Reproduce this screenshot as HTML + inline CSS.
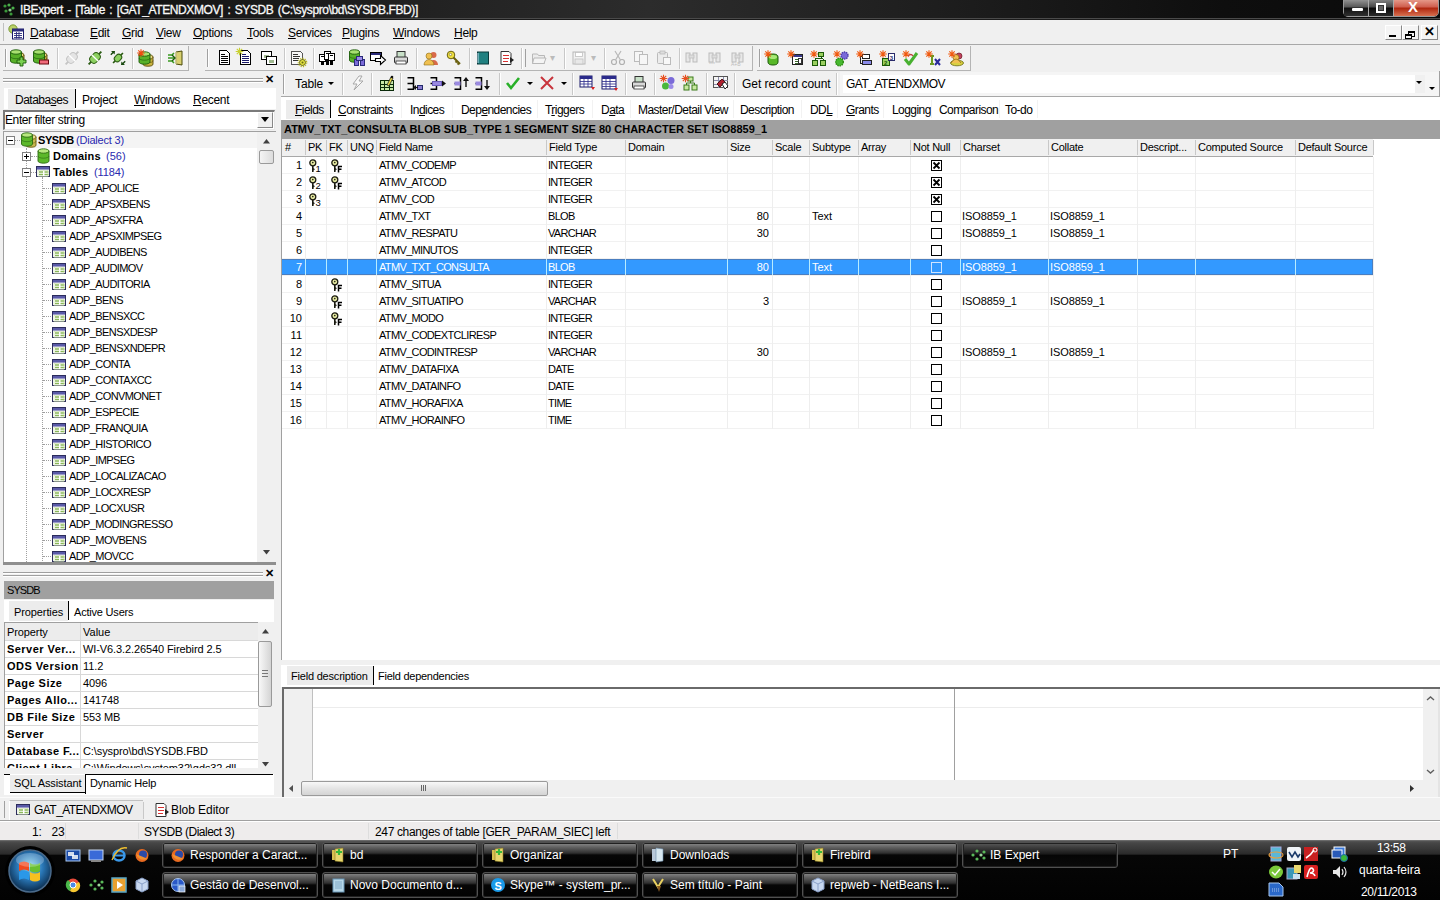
<!DOCTYPE html><html><head><meta charset="utf-8"><title>IBExpert</title><style>
*{margin:0;padding:0;box-sizing:border-box}
html,body{width:1440px;height:900px;overflow:hidden;background:#f0f0f0;font-family:"Liberation Sans",sans-serif;font-size:11px;color:#000}
.r{position:absolute}
.t{position:absolute;white-space:nowrap;line-height:17px;font-size:11px}
.u{letter-spacing:-0.6px}
.b{font-weight:bold}
.s12{font-size:12px}
.ic{position:absolute;overflow:visible}
u{text-decoration:underline;text-underline-offset:1px}
</style></head><body>
<div class="r" style="left:0px;top:0px;width:1440px;height:19px;background:linear-gradient(90deg,#0d0d0d 0%,#1b1b1b 20%,#2c2c2c 45%,#1e1e1e 65%,#0e0e0e 85%,#0a0a0a 100%)"></div>
<div class="r" style="left:0px;top:18px;width:1440px;height:1px;background:#4a4a4a"></div>
<div class="r" style="left:0px;top:19px;width:1440px;height:1px;background:#1a1a1a"></div>
<svg class="ic" style="left:2px;top:2px" width="14" height="14" viewBox="0 0 14 14"><circle cx="3" cy="4" r="1.6" fill="#3a9a3a"/><circle cx="7" cy="3" r="1.6" fill="#4ab04a"/><circle cx="11" cy="6" r="1.6" fill="#4ab04a"/><circle cx="4" cy="9" r="1.6" fill="#3a9a3a"/><circle cx="8" cy="8" r="1.6" fill="#8ad08a"/><circle cx="9" cy="12" r="1.6" fill="#3a9a3a"/></svg>
<span class="t " style="left:20px;top:2px;color:#f8f8f8;font-size:12px;letter-spacing:-0.4px;word-spacing:1.5px;-webkit-text-stroke:0.3px #f8f8f8">IBExpert - [Table : [GAT_ATENDXMOV] : SYSDB (C:\syspro\bd\SYSDB.FBD)]</span>
<div class="r" style="left:1343px;top:-2px;width:96px;height:19px;border:1px solid #9a9a9a;border-radius:0 0 5px 5px;background:#202020"></div>
<div class="r" style="left:1344px;top:-1px;width:25px;height:17px;background:linear-gradient(#9a9a9a,#5a5a5a 45%,#101010 55%,#303030);border-right:1px solid #aaa"></div>
<div class="r" style="left:1369px;top:-1px;width:25px;height:17px;background:linear-gradient(#8a8a8a,#4a4a4a 45%,#0a0a0a 55%,#2a2a2a);border-right:1px solid #aaa"></div>
<div class="r" style="left:1394px;top:-1px;width:44px;height:17px;background:linear-gradient(#e8a090,#d06050 45%,#b02810 55%,#d87050);border-radius:0 0 4px 0"></div>
<div class="r" style="left:1352px;top:8px;width:11px;height:3px;background:#fff;border-radius:1px"></div>
<div class="r" style="left:1376px;top:3px;width:10px;height:10px;border:2px solid #fff;background:#333"></div>
<div class="r" style="left:1379px;top:6px;width:4px;height:4px;background:#666"></div>
<span class="t" style="left:1408px;top:-2px;color:#fff;font-size:15px;font-weight:bold">X</span>
<div class="r" style="left:0px;top:20px;width:1440px;height:25px;background:#f0f0f0"></div>
<div class="r" style="left:0px;top:44px;width:1440px;height:1px;background:#a8a8a8"></div>
<div class="r" style="left:3px;top:23px;width:1px;height:18px;background:#c0c0c0"></div>
<svg class="ic" style="left:8px;top:24px" width="17" height="17" viewBox="0 0 17 17"><circle cx="5" cy="5" r="4.2" fill="#b8d068" stroke="#6a8a20" stroke-width="0.8"/><rect x="4.5" y="5" width="11" height="10" fill="#fff" stroke="#1a1a6a"/><rect x="4.5" y="5" width="11" height="2.5" fill="#2a2a7a"/><path d="M6,9.5h8M6,11.5h8M6,13.5h8M8.5,8v6.5M11,8v6.5" stroke="#2a2a7a" stroke-width="0.9"/></svg>
<span class="t " style="left:30px;top:25px;font-size:12px;line-height:17px;letter-spacing:-0.3px"><u>D</u>atabase</span>
<span class="t " style="left:90px;top:25px;font-size:12px;line-height:17px;letter-spacing:-0.3px"><u>E</u>dit</span>
<span class="t " style="left:122px;top:25px;font-size:12px;line-height:17px;letter-spacing:-0.3px"><u>G</u>rid</span>
<span class="t " style="left:156px;top:25px;font-size:12px;line-height:17px;letter-spacing:-0.3px"><u>V</u>iew</span>
<span class="t " style="left:193px;top:25px;font-size:12px;line-height:17px;letter-spacing:-0.3px"><u>O</u>ptions</span>
<span class="t " style="left:247px;top:25px;font-size:12px;line-height:17px;letter-spacing:-0.3px"><u>T</u>ools</span>
<span class="t " style="left:288px;top:25px;font-size:12px;line-height:17px;letter-spacing:-0.3px"><u>S</u>ervices</span>
<span class="t " style="left:342px;top:25px;font-size:12px;line-height:17px;letter-spacing:-0.3px"><u>P</u>lugins</span>
<span class="t " style="left:393px;top:25px;font-size:12px;line-height:17px;letter-spacing:-0.3px"><u>W</u>indows</span>
<span class="t " style="left:454px;top:25px;font-size:12px;line-height:17px;letter-spacing:-0.3px"><u>H</u>elp</span>
<div class="r" style="left:1385px;top:25px;width:17px;height:15px;background:#f4f4f4;border-right:1px solid #888;border-bottom:1px solid #888;border-top:1px solid #fff;border-left:1px solid #fff"></div>
<div class="r" style="left:1402px;top:25px;width:17px;height:15px;background:#f4f4f4;border-right:1px solid #888;border-bottom:1px solid #888;border-top:1px solid #fff;border-left:1px solid #fff"></div>
<div class="r" style="left:1421px;top:25px;width:17px;height:15px;background:#f4f4f4;border-right:1px solid #888;border-bottom:1px solid #888;border-top:1px solid #fff;border-left:1px solid #fff"></div>
<div class="r" style="left:1389px;top:35px;width:7px;height:2px;background:#000"></div>
<div class="r" style="left:1408px;top:31px;width:7px;height:6px;border:1.5px solid #000;border-top-width:2px;background:#f4f4f4"></div>
<div class="r" style="left:1405px;top:34px;width:7px;height:5px;border:1.5px solid #000;border-top-width:2px;background:#f4f4f4"></div>
<span class="t" style="left:1424px;top:23px;font-size:13px;font-weight:bold;line-height:17px">&#x2715;</span>
<div class="r" style="left:0px;top:45px;width:1440px;height:26px;background:#f0f0f0"></div>
<div class="r" style="left:3px;top:46px;width:186px;height:25px;border-right:1px solid #b4b4b4;border-bottom:1px solid #b4b4b4;background:#f2f2f2"></div>
<div class="r" style="left:5px;top:49px;width:1px;height:18px;background:#a0a0a0"></div>
<div class="r" style="left:6px;top:49px;width:1px;height:18px;background:#fff"></div>
<svg class="ic" style="left:9px;top:49px" width="18" height="18" viewBox="0 0 18 18"><path d="M7,6 L7,12 A4,2.2 0 0 0 15,12 L15,6 Z" fill="#c8b440" stroke="#5a4a08" stroke-width="0.9"/><path d="M7,9.0 A4,2.2 0 0 0 15,9.0" fill="none" stroke="#5a4a08" stroke-width="0.6"/><ellipse cx="11" cy="6" rx="4" ry="2.2" fill="#e8d880" stroke="#5a4a08" stroke-width="0.9"/><path d="M1.5,3 L1.5,12 A5.5,2.2 0 0 0 12.5,12 L12.5,3 Z" fill="#58b028" stroke="#1a5a08" stroke-width="0.9"/><path d="M1.5,7.5 A5.5,2.2 0 0 0 12.5,7.5" fill="none" stroke="#1a5a08" stroke-width="0.6"/><ellipse cx="7" cy="3" rx="5.5" ry="2.2" fill="#a8e070" stroke="#1a5a08" stroke-width="0.9"/><path d="M11,8h3v3h3v3h-3v3h-3v-3h-3v-3h3z" fill="#7ad050" stroke="#1a5a08" stroke-width="0.9"/></svg>
<svg class="ic" style="left:32px;top:49px" width="18" height="18" viewBox="0 0 18 18"><path d="M7,6 L7,12 A4,2.2 0 0 0 15,12 L15,6 Z" fill="#c8b440" stroke="#5a4a08" stroke-width="0.9"/><path d="M7,9.0 A4,2.2 0 0 0 15,9.0" fill="none" stroke="#5a4a08" stroke-width="0.6"/><ellipse cx="11" cy="6" rx="4" ry="2.2" fill="#e8d880" stroke="#5a4a08" stroke-width="0.9"/><path d="M1.5,3 L1.5,12 A5.5,2.2 0 0 0 12.5,12 L12.5,3 Z" fill="#58b028" stroke="#1a5a08" stroke-width="0.9"/><path d="M1.5,7.5 A5.5,2.2 0 0 0 12.5,7.5" fill="none" stroke="#1a5a08" stroke-width="0.6"/><ellipse cx="7" cy="3" rx="5.5" ry="2.2" fill="#a8e070" stroke="#1a5a08" stroke-width="0.9"/><rect x="7.5" y="11" width="9" height="4" fill="#f06a7a" stroke="#6a0a10" stroke-width="1"/></svg>
<div class="r" style="left:57px;top:48px;width:1px;height:21px;background:#c8c8c8"></div>
<div class="r" style="left:58px;top:48px;width:1px;height:21px;background:#fff"></div>
<svg class="ic" style="left:64px;top:50px" width="16" height="16" viewBox="0 0 16 16"><g transform="rotate(-45 8 8)"><rect x="2.5" y="4" width="11" height="8" rx="3.5" fill="#e4e4e4" stroke="#c4c4c4" stroke-width="1"/><path d="M8,3 v10" stroke="#fff" stroke-width="1.3"/><path d="M-1,8 h3.5 M13.5,8 h3.5" stroke="#c4c4c4" stroke-width="1.8"/></g></svg>
<svg class="ic" style="left:87px;top:50px" width="16" height="16" viewBox="0 0 16 16"><g transform="rotate(-45 8 8)"><rect x="2.5" y="4" width="11" height="8" rx="3.5" fill="#8cd060" stroke="#2a5a12" stroke-width="1"/><path d="M8,3 v10" stroke="#fff" stroke-width="1.3"/><path d="M-1,8 h3.5 M13.5,8 h3.5" stroke="#2a5a12" stroke-width="1.8"/></g></svg>
<svg class="ic" style="left:110px;top:50px" width="16" height="16" viewBox="0 0 16 16"><g transform="rotate(-45 8 8)"><rect x="4" y="5" width="8" height="6" rx="3" fill="#8cd060" stroke="#2a5a12" stroke-width="1"/><path d="M1,8 h3 M12,8 h3" stroke="#2a5a12" stroke-width="1.6"/></g><path d="M1,1 v4 l1.3,-1.3 l2,2 l1,-1 l-2,-2 l1.3,-1.3z" fill="#1a4a10" transform="rotate(90 3 3)"/><path d="M15,15 v-4 l-1.3,1.3 l-2,-2 l-1,1 l2,2 l-1.3,1.3z" fill="#1a4a10" transform="rotate(90 13 13)"/></svg>
<div class="r" style="left:132px;top:48px;width:1px;height:21px;background:#c8c8c8"></div>
<div class="r" style="left:133px;top:48px;width:1px;height:21px;background:#fff"></div>
<svg class="ic" style="left:137px;top:49px" width="18" height="18" viewBox="0 0 18 18"><path d="M6,8 L6,15 A5,2.2 0 0 0 16,15 L16,8 Z" fill="#c8b440" stroke="#5a4a08" stroke-width="0.9"/><path d="M6,11.5 A5,2.2 0 0 0 16,11.5" fill="none" stroke="#5a4a08" stroke-width="0.6"/><ellipse cx="11" cy="8" rx="5" ry="2.2" fill="#e8d880" stroke="#5a4a08" stroke-width="0.9"/><path d="M2.0,5 L2.0,13 A5.5,2.2 0 0 0 13.0,13 L13.0,5 Z" fill="#58b028" stroke="#1a5a08" stroke-width="0.9"/><path d="M2.0,9.0 A5.5,2.2 0 0 0 13.0,9.0" fill="none" stroke="#1a5a08" stroke-width="0.6"/><ellipse cx="7.5" cy="5" rx="5.5" ry="2.2" fill="#a8e070" stroke="#1a5a08" stroke-width="0.9"/><g stroke="#f04a10" stroke-width="1.1"><path d="M0.20000000000000018,4 h7.6 M4,0.20000000000000018 v7.6 M1.2999999999999998,1.2999999999999998 l5.4,5.4 M6.7,1.2999999999999998 l-5.4,5.4"/></g></svg>
<div class="r" style="left:160px;top:48px;width:1px;height:21px;background:#c8c8c8"></div>
<div class="r" style="left:161px;top:48px;width:1px;height:21px;background:#fff"></div>
<svg class="ic" style="left:167px;top:50px" width="16" height="16" viewBox="0 0 16 16"><path d="M9,2 L15,1 L15,15 L9,14 Z" fill="#d8d070" stroke="#4a4a08" stroke-width="1"/><path d="M9,2 v12" stroke="#f8f0b0" stroke-width="1"/><path d="M1,5 h4 l2,-2 M1,8 h6 M1,11 h4 l2,2" stroke="#3a9a20" stroke-width="1.6" fill="none"/><path d="M5,5 l3,3 l-3,3" stroke="#1a5a08" stroke-width="1.4" fill="none"/></svg>
<div class="r" style="left:205px;top:46px;width:548px;height:25px;border-right:1px solid #b4b4b4;border-bottom:1px solid #b4b4b4;background:#f2f2f2"></div>
<div class="r" style="left:207px;top:49px;width:1px;height:18px;background:#a0a0a0"></div>
<div class="r" style="left:208px;top:49px;width:1px;height:18px;background:#fff"></div>
<svg class="ic" style="left:217px;top:49px" width="18" height="18" viewBox="0 0 18 18"><g shape-rendering="crispEdges"><path d="M2.5,1.5 h7 l3,3 v11 h-10z" fill="#fff" stroke="#000" stroke-width="1"/><path d="M4,5.5h4M4,7.5h7M4,9.5h7M4,11.5h7M4,13.5h7" stroke="#000" stroke-width="1"/></g></svg>
<svg class="ic" style="left:236px;top:48px" width="18" height="18" viewBox="0 0 18 18"><g transform="translate(2,1)"><g shape-rendering="crispEdges"><path d="M2.5,1.5 h7 l3,3 v11 h-10z" fill="#fff" stroke="#000" stroke-width="1"/><path d="M4,5.5h4M4,7.5h7M4,9.5h7M4,11.5h7M4,13.5h7" stroke="#1a1a6a" stroke-width="1"/></g></g><g stroke="#c8d030" stroke-width="1.1"><path d="M-0.2999999999999998,3.5 h7.6 M3.5,-0.2999999999999998 v7.6 M0.7999999999999998,0.7999999999999998 l5.4,5.4 M6.2,0.7999999999999998 l-5.4,5.4"/></g></svg>
<svg class="ic" style="left:261px;top:50px" width="17" height="17" viewBox="0 0 17 17"><g shape-rendering="crispEdges"><rect x="0.5" y="1.5" width="10" height="8" fill="#fff" stroke="#000" stroke-width="1.6"/><rect x="2.5" y="4.5" width="5" height="3" fill="#a0b890"/><rect x="5.5" y="6.5" width="10" height="8" fill="#fff" stroke="#000" stroke-width="1.6"/><rect x="7.5" y="9.5" width="5" height="3" fill="#a0b890"/></g></svg>
<div class="r" style="left:284px;top:48px;width:1px;height:21px;background:#c8c8c8"></div>
<div class="r" style="left:285px;top:48px;width:1px;height:21px;background:#fff"></div>
<svg class="ic" style="left:290px;top:50px" width="17" height="17" viewBox="0 0 17 17"><g shape-rendering="crispEdges"><path d="M1.5,1.5 h9 l2,2 v11 h-11z" fill="#f8f8f8" stroke="#555"/><path d="M3,4.5h5M3,6.5h7M3,8.5h6M3,10.5h5" stroke="#333"/></g><circle cx="12.5" cy="12.5" r="3" fill="#e0e040" stroke="#6a6a10" stroke-width="1"/><circle cx="12.5" cy="12.5" r="4.2" fill="none" stroke="#b8b820" stroke-width="1.2" stroke-dasharray="1.2 1.2"/><circle cx="12.5" cy="12.5" r="1" fill="#6a6a10"/></svg>
<div class="r" style="left:313px;top:48px;width:1px;height:21px;background:#c8c8c8"></div>
<div class="r" style="left:314px;top:48px;width:1px;height:21px;background:#fff"></div>
<svg class="ic" style="left:319px;top:50px" width="17" height="17" viewBox="0 0 17 17"><g shape-rendering="crispEdges"><rect x="0.5" y="4.5" width="6" height="7" fill="#fff" stroke="#000"/><rect x="5.5" y="1.5" width="6" height="8" fill="#fff" stroke="#000"/><rect x="9.5" y="3.5" width="6" height="7" fill="#fff" stroke="#000"/><path d="M2,6.5h3M7,3.5h3M11,5.5h3" stroke="#000"/><rect x="2" y="11" width="3" height="4" fill="#000"/><rect x="7" y="9" width="3" height="6" fill="#000"/><rect x="11" y="10" width="3" height="5" fill="#000"/></g></svg>
<div class="r" style="left:342px;top:48px;width:1px;height:21px;background:#c8c8c8"></div>
<div class="r" style="left:343px;top:48px;width:1px;height:21px;background:#fff"></div>
<svg class="ic" style="left:348px;top:49px" width="17" height="17" viewBox="0 0 17 17"><path d="M1.5,3 L1.5,11 A5,2.2 0 0 0 11.5,11 L11.5,3 Z" fill="#58b028" stroke="#1a5a08" stroke-width="0.9"/><path d="M1.5,7.0 A5,2.2 0 0 0 11.5,7.0" fill="none" stroke="#1a5a08" stroke-width="0.6"/><ellipse cx="6.5" cy="3" rx="5" ry="2.2" fill="#a8e070" stroke="#1a5a08" stroke-width="0.9"/><g shape-rendering="crispEdges"><rect x="6" y="10" width="4" height="6" fill="#7a6ad8" stroke="#2a2a7a"/><rect x="12" y="10" width="4" height="6" fill="#7a6ad8" stroke="#2a2a7a"/><rect x="8" y="7" width="6" height="4" fill="#9a8ae8" stroke="#2a2a7a"/></g></svg>
<svg class="ic" style="left:370px;top:50px" width="17" height="17" viewBox="0 0 17 17"><g shape-rendering="crispEdges"><rect x="0.5" y="2.5" width="11" height="8" fill="#fff" stroke="#000" stroke-width="1.2"/><rect x="1" y="3" width="10" height="2" fill="#2a2a7a"/></g><path d="M5.5,8.5h5v-3l5,4.5l-5,4.5v-3h-5z" fill="#fff" stroke="#000" stroke-width="1.1"/></svg>
<svg class="ic" style="left:393px;top:50px" width="16" height="16" viewBox="0 0 16 16"><rect x="4" y="1.5" width="8" height="6" fill="#c8e0c8" stroke="#333"/><rect x="1.5" y="7" width="13" height="6" rx="1" fill="#d8d8d8" stroke="#333"/><rect x="3" y="11" width="10" height="3" fill="#fff" stroke="#333" stroke-width="0.8"/></svg>
<div class="r" style="left:416px;top:48px;width:1px;height:21px;background:#c8c8c8"></div>
<div class="r" style="left:417px;top:48px;width:1px;height:21px;background:#fff"></div>
<svg class="ic" style="left:423px;top:50px" width="16" height="16" viewBox="0 0 16 16"><circle cx="10.5" cy="5" r="3" fill="#d86a4a"/><path d="M6,15 a4.5,5 0 0 1 9,0z" fill="#d86a4a"/><circle cx="6" cy="6" r="3" fill="#f0c050" stroke="#8a6a10" stroke-width="0.6"/><path d="M1,15 a5,5.5 0 0 1 10,0z" fill="#f0c050" stroke="#8a6a10" stroke-width="0.6"/></svg>
<svg class="ic" style="left:446px;top:50px" width="16" height="16" viewBox="0 0 16 16"><circle cx="5" cy="5" r="3.8" fill="#f0e040" stroke="#6a6010" stroke-width="1"/><circle cx="4.5" cy="4.5" r="1.2" fill="#fff" stroke="#6a6010" stroke-width="0.6"/><path d="M7.5,7.5 L14,14 M11,11l-1.5,1.5 M13,13l-1.5,1.5" stroke="#6a6010" stroke-width="2"/></svg>
<div class="r" style="left:469px;top:48px;width:1px;height:21px;background:#c8c8c8"></div>
<div class="r" style="left:470px;top:48px;width:1px;height:21px;background:#fff"></div>
<svg class="ic" style="left:475px;top:50px" width="16" height="16" viewBox="0 0 16 16"><rect x="2.5" y="2" width="11" height="12" fill="#208080" stroke="#0a3a3a"/><path d="M3,3v10" stroke="#bde" stroke-width="1"/></svg>
<svg class="ic" style="left:499px;top:50px" width="16" height="16" viewBox="0 0 16 16"><path d="M2,1.5h8l2,2v11h-10z" fill="#fff" stroke="#333"/><path d="M4,5.5h6M4,8.5h6M4,11.5h5" stroke="#d83030" stroke-width="1.2"/><path d="M11,7 l4,3 l-4,3z" fill="#222"/></svg>
<div class="r" style="left:521px;top:48px;width:1px;height:21px;background:#c8c8c8"></div>
<div class="r" style="left:522px;top:48px;width:1px;height:21px;background:#fff"></div>
<div class="r" style="left:525px;top:49px;width:1px;height:18px;background:#a0a0a0"></div>
<svg class="ic" style="left:531px;top:50px" width="16" height="16" viewBox="0 0 16 16"><path d="M1.5,4h5l1,1.5h6v8h-12z" fill="#ececec" stroke="#b8b8b8"/><path d="M3,8h12l-2,5.5h-11.5z" fill="#f4f4f4" stroke="#b8b8b8"/></svg>
<span class="t " style="left:550px;top:49px;color:#bbb;font-size:10px">&#9662;</span>
<div class="r" style="left:564px;top:48px;width:1px;height:21px;background:#c8c8c8"></div>
<div class="r" style="left:565px;top:48px;width:1px;height:21px;background:#fff"></div>
<svg class="ic" style="left:571px;top:50px" width="16" height="16" viewBox="0 0 16 16"><rect x="2" y="2" width="12" height="12" fill="#f2f2f2" stroke="#b8b8b8"/><rect x="4.5" y="2.5" width="7" height="4" fill="#fff" stroke="#c0c0c0" stroke-width="0.8"/><rect x="4" y="9" width="8" height="5" fill="#e8e8e8" stroke="#c0c0c0" stroke-width="0.8"/></svg>
<span class="t " style="left:591px;top:49px;color:#bbb;font-size:10px">&#9662;</span>
<div class="r" style="left:604px;top:48px;width:1px;height:21px;background:#c8c8c8"></div>
<div class="r" style="left:605px;top:48px;width:1px;height:21px;background:#fff"></div>
<svg class="ic" style="left:610px;top:50px" width="16" height="16" viewBox="0 0 16 16"><circle cx="4" cy="12" r="2.5" fill="none" stroke="#b0b0b0" stroke-width="1.2"/><circle cx="12" cy="12" r="2.5" fill="none" stroke="#b0b0b0" stroke-width="1.2"/><path d="M5.5,10 L11,1 M10.5,10 L5,1" stroke="#b8b8b8" stroke-width="1.2"/></svg>
<svg class="ic" style="left:633px;top:50px" width="16" height="16" viewBox="0 0 16 16"><rect x="1.5" y="1.5" width="8" height="10" fill="#f6f6f6" stroke="#bbb"/><rect x="6.5" y="4.5" width="8" height="10" fill="#f6f6f6" stroke="#bbb"/></svg>
<svg class="ic" style="left:656px;top:50px" width="16" height="16" viewBox="0 0 16 16"><rect x="1.5" y="2.5" width="10" height="11" rx="1" fill="#ececec" stroke="#bbb"/><rect x="4" y="1" width="5" height="3" fill="#ddd" stroke="#bbb" stroke-width="0.8"/><rect x="7.5" y="7.5" width="7" height="7" fill="#f8f8f8" stroke="#bbb"/></svg>
<div class="r" style="left:679px;top:48px;width:1px;height:21px;background:#c8c8c8"></div>
<div class="r" style="left:680px;top:48px;width:1px;height:21px;background:#fff"></div>
<svg class="ic" style="left:684px;top:50px" width="16" height="16" viewBox="0 0 16 16"><rect x="2" y="3" width="4" height="9" fill="#e8e8e8" stroke="#bbb"/><rect x="9" y="3" width="4" height="9" fill="#e8e8e8" stroke="#bbb"/><rect x="5" y="5" width="5" height="3" fill="#ddd" stroke="#bbb" stroke-width="0.7"/></svg>
<svg class="ic" style="left:707px;top:50px" width="16" height="16" viewBox="0 0 16 16"><rect x="2" y="3" width="4" height="9" fill="#e8e8e8" stroke="#bbb"/><rect x="9" y="3" width="4" height="9" fill="#e8e8e8" stroke="#bbb"/><rect x="5" y="5" width="5" height="3" fill="#ddd" stroke="#bbb" stroke-width="0.7"/><text x="2" y="16" font-size="5" fill="#bbb">***</text></svg>
<svg class="ic" style="left:730px;top:50px" width="16" height="16" viewBox="0 0 16 16"><rect x="2" y="3" width="4" height="9" fill="#e8e8e8" stroke="#bbb"/><rect x="9" y="3" width="4" height="9" fill="#e8e8e8" stroke="#bbb"/><rect x="5" y="5" width="5" height="3" fill="#ddd" stroke="#bbb" stroke-width="0.7"/><text x="1" y="16" font-size="5" fill="#bbb">A+B</text></svg>
<div class="r" style="left:757px;top:46px;width:214px;height:25px;border-right:1px solid #b4b4b4;border-bottom:1px solid #b4b4b4;background:#f2f2f2"></div>
<div class="r" style="left:759px;top:49px;width:1px;height:18px;background:#a0a0a0"></div>
<div class="r" style="left:760px;top:49px;width:1px;height:18px;background:#fff"></div>
<svg class="ic" style="left:764px;top:50px" width="17" height="17" viewBox="0 0 17 17"><path d="M4,7 q0,-3 5,-3 q5,0 5,3 v5 q0,3 -5,3 q-5,0 -5,-3z" fill="#58b828" stroke="#1a5a08" stroke-width="1"/><ellipse cx="9" cy="7" rx="4" ry="2" fill="#a8e878"/><g stroke="#f05a10" stroke-width="1.1"><path d="M0.20000000000000018,4 h7.6 M4,0.20000000000000018 v7.6 M1.2999999999999998,1.2999999999999998 l5.4,5.4 M6.7,1.2999999999999998 l-5.4,5.4"/></g></svg>
<svg class="ic" style="left:787px;top:50px" width="17" height="17" viewBox="0 0 17 17"><g shape-rendering="crispEdges"><rect x="5.5" y="4.5" width="10" height="10" fill="#fff" stroke="#222"/><rect x="6" y="5" width="9" height="2" fill="#3a3a8a"/><path d="M8,9.5h3M8,11.5h3M8,13.5h3" stroke="#3a6a2a"/><rect x="11.5" y="8.5" width="3" height="5" fill="#fff" stroke="#333"/></g><g stroke="#f05a10" stroke-width="1.1"><path d="M0.20000000000000018,4 h7.6 M4,0.20000000000000018 v7.6 M1.2999999999999998,1.2999999999999998 l5.4,5.4 M6.7,1.2999999999999998 l-5.4,5.4"/></g></svg>
<svg class="ic" style="left:810px;top:50px" width="17" height="17" viewBox="0 0 17 17"><g shape-rendering="crispEdges"><rect x="8.5" y="2.5" width="5" height="4" fill="#9ad060" stroke="#1a5a08"/><rect x="2.5" y="10.5" width="5" height="5" fill="#9ad060" stroke="#1a5a08"/><rect x="10.5" y="10.5" width="5" height="5" fill="#9ad060" stroke="#1a5a08"/><path d="M11,6.5v2M5,8.5h8M5,8.5v2M13,8.5v2" stroke="#1a5a08"/></g><g stroke="#f05a10" stroke-width="1.1"><path d="M0.20000000000000018,4 h7.6 M4,0.20000000000000018 v7.6 M1.2999999999999998,1.2999999999999998 l5.4,5.4 M6.7,1.2999999999999998 l-5.4,5.4"/></g></svg>
<svg class="ic" style="left:833px;top:50px" width="17" height="17" viewBox="0 0 17 17"><circle cx="11.5" cy="5.5" r="3.5" fill="#7a6ad8" stroke="#4a3aa8" stroke-width="1.4" stroke-dasharray="1.4 0.8"/><circle cx="6.5" cy="12" r="3.8" fill="#48b830" stroke="#2a8a10" stroke-width="1.4" stroke-dasharray="1.4 0.8"/><g stroke="#f05a10" stroke-width="1.1"><path d="M0.20000000000000018,4 h7.6 M4,0.20000000000000018 v7.6 M1.2999999999999998,1.2999999999999998 l5.4,5.4 M6.7,1.2999999999999998 l-5.4,5.4"/></g></svg>
<svg class="ic" style="left:856px;top:50px" width="17" height="17" viewBox="0 0 17 17"><g shape-rendering="crispEdges"><rect x="6.5" y="4.5" width="7" height="4" fill="#fff" stroke="#222"/><rect x="6.5" y="10.5" width="9" height="4" fill="#8a8ae8" stroke="#222"/><path d="M4.5,6v7h2M4.5,6h2" stroke="#222" fill="none"/></g><g stroke="#f05a10" stroke-width="1.1"><path d="M0.20000000000000018,4 h7.6 M4,0.20000000000000018 v7.6 M1.2999999999999998,1.2999999999999998 l5.4,5.4 M6.7,1.2999999999999998 l-5.4,5.4"/></g></svg>
<svg class="ic" style="left:879px;top:50px" width="17" height="17" viewBox="0 0 17 17"><g shape-rendering="crispEdges"><rect x="3.5" y="8.5" width="7" height="7" fill="#9ad060" stroke="#1a5a08"/><rect x="9.5" y="3.5" width="6" height="7" fill="#fff" stroke="#2a2a6a"/></g><text x="10.8" y="9.5" font-size="6" font-weight="bold" fill="#2a2a6a" font-family="Liberation Sans">3</text><text x="5" y="14.5" font-size="6" font-weight="bold" fill="#1a5a08" font-family="Liberation Sans">2</text><g stroke="#f05a10" stroke-width="1.1"><path d="M0.20000000000000018,4 h7.6 M4,0.20000000000000018 v7.6 M1.2999999999999998,1.2999999999999998 l5.4,5.4 M6.7,1.2999999999999998 l-5.4,5.4"/></g></svg>
<svg class="ic" style="left:902px;top:50px" width="17" height="17" viewBox="0 0 17 17"><path d="M3,9 l4,5 l8,-11" stroke="#48b030" stroke-width="3" fill="none" stroke-linejoin="round"/><path d="M6,6 q3,-3 5,0" stroke="#c04040" stroke-width="1.3" fill="none"/><g stroke="#f05a10" stroke-width="1.1"><path d="M0.20000000000000018,4 h7.6 M4,0.20000000000000018 v7.6 M1.2999999999999998,1.2999999999999998 l5.4,5.4 M6.7,1.2999999999999998 l-5.4,5.4"/></g></svg>
<svg class="ic" style="left:925px;top:50px" width="17" height="17" viewBox="0 0 17 17"><path d="M5,6h4M7,6v8M5,14h4" stroke="#6a9a20" stroke-width="2" fill="none"/><path d="M10,9 l5,6 M15,9 l-5,6" stroke="#2a2a9a" stroke-width="2"/><g stroke="#f05a10" stroke-width="1.1"><path d="M0.20000000000000018,4 h7.6 M4,0.20000000000000018 v7.6 M1.2999999999999998,1.2999999999999998 l5.4,5.4 M6.7,1.2999999999999998 l-5.4,5.4"/></g></svg>
<svg class="ic" style="left:948px;top:50px" width="17" height="17" viewBox="0 0 17 17"><ellipse cx="9" cy="13" rx="6.5" ry="2.8" fill="#d8d040" stroke="#6a6a10" stroke-width="0.8"/><circle cx="11" cy="6" r="3" fill="#c04060" stroke="#6a1a20" stroke-width="0.7"/><circle cx="8" cy="7.5" r="3" fill="#f0c050" stroke="#8a6010" stroke-width="0.7"/><path d="M3,13 q5,-8 10,0" fill="#f0c050" stroke="#8a6010" stroke-width="0.7"/><g stroke="#f05a10" stroke-width="1.1"><path d="M0.20000000000000018,4 h7.6 M4,0.20000000000000018 v7.6 M1.2999999999999998,1.2999999999999998 l5.4,5.4 M6.7,1.2999999999999998 l-5.4,5.4"/></g></svg>
<div class="r" style="left:0px;top:71px;width:278px;height:730px;background:#f0f0f0"></div>
<div class="r" style="left:3px;top:78px;width:260px;height:1px;background:#a0a0a0"></div>
<div class="r" style="left:3px;top:79px;width:260px;height:1px;background:#fff"></div>
<div class="r" style="left:3px;top:81px;width:260px;height:1px;background:#a0a0a0"></div>
<div class="r" style="left:3px;top:82px;width:260px;height:1px;background:#fff"></div>
<span class="t" style="left:265px;top:71px;font-size:11px;font-weight:bold">&#x2715;</span>
<div class="r" style="left:4px;top:88px;width:272px;height:21px;background:#fff"></div>
<div class="r" style="left:8px;top:89px;width:67px;height:20px;background:#ececec"></div>
<div class="r" style="left:75px;top:89px;width:1px;height:19px;background:#000"></div>
<span class="t " style="left:15px;top:92px;font-size:12px;letter-spacing:-0.5px">Databa<u>s</u>es</span>
<span class="t " style="left:82px;top:92px;font-size:12px;letter-spacing:-0.3px">Pro<u>j</u>ect</span>
<span class="t " style="left:134px;top:92px;font-size:12px;letter-spacing:-0.4px"><u>W</u>indows</span>
<span class="t " style="left:193px;top:92px;font-size:12px;letter-spacing:-0.3px"><u>R</u>ecent</span>
<div class="r" style="left:3px;top:110px;width:272px;height:20px;background:#fff;border-top:2px solid #7a7a7a;border-left:2px solid #7a7a7a;border-bottom:1px solid #e8e8e8;border-right:1px solid #e8e8e8"></div>
<div class="r" style="left:257px;top:112px;width:16px;height:16px;background:#f0f0f0;border:1px solid #fff;border-right-color:#888;border-bottom-color:#888"></div>
<svg class="ic" style="left:261px;top:117px" width="8" height="5" viewBox="0 0 8 5"><path d="M0,0h8l-4,5z" fill="#000"/></svg>
<span class="t " style="left:5px;top:112px;font-size:12px;letter-spacing:-0.4px">Enter filter string</span>
<div class="r" style="left:3px;top:131px;width:273px;height:434px;background:#fff;border-top:1px solid #a0a0a0;border-left:1px solid #a0a0a0;border-bottom:3px solid #8f8f8f"></div>
<div class="r" style="left:4px;top:132px;width:253px;height:16px;background:#f4f4f4"></div>
<div class="r" style="left:257px;top:132px;width:19px;height:430px;background:#f0f0f0"></div>
<svg class="ic" style="left:263px;top:139px" width="7" height="5" viewBox="0 0 7 5"><path d="M0,4.5 L3.5,0 L7,4.5z" fill="#404040"/></svg>
<svg class="ic" style="left:263px;top:550px" width="7" height="5" viewBox="0 0 7 5"><path d="M0,0 L3.5,4.5 L7,0z" fill="#404040"/></svg>
<div class="r" style="left:259px;top:150px;width:15px;height:14px;background:linear-gradient(90deg,#f4f4f4,#dcdcdc);border:1px solid #9a9a9a;border-radius:2px"></div>
<div class="r" style="left:26px;top:148px;width:1px;height:416px;border-left:1px dotted #a0a0a0"></div>
<div class="r" style="left:42px;top:177px;width:1px;height:388px;border-left:1px dotted #a0a0a0"></div>
<div class="r" style="left:6px;top:136px;width:9px;height:9px;background:#fff;border:1px solid #808080"></div>
<div class="r" style="left:8px;top:140px;width:5px;height:1px;background:#000"></div>
<div class="r" style="left:22px;top:152px;width:9px;height:9px;background:#fff;border:1px solid #808080"></div>
<div class="r" style="left:24px;top:156px;width:5px;height:1px;background:#000"></div>
<div class="r" style="left:26px;top:154px;width:1px;height:5px;background:#000"></div>
<div class="r" style="left:22px;top:168px;width:9px;height:9px;background:#fff;border:1px solid #808080"></div>
<div class="r" style="left:24px;top:172px;width:5px;height:1px;background:#000"></div>
<div class="r" style="left:15px;top:140px;width:5px;height:1px;border-top:1px dotted #a0a0a0"></div>
<div class="r" style="left:31px;top:156px;width:6px;height:1px;border-top:1px dotted #a0a0a0"></div>
<div class="r" style="left:31px;top:172px;width:5px;height:1px;border-top:1px dotted #a0a0a0"></div>
<svg class="ic" style="left:20px;top:131px" width="17" height="17" viewBox="0 0 17 17"><path d="M6,6 L6,14 A5,2.2 0 0 0 16,14 L16,6 Z" fill="#c8b850" stroke="#6a5a10" stroke-width="0.9"/><path d="M6,10.0 A5,2.2 0 0 0 16,10.0" fill="none" stroke="#6a5a10" stroke-width="0.6"/><ellipse cx="11" cy="6" rx="5" ry="2.2" fill="#e8dc90" stroke="#6a5a10" stroke-width="0.9"/><path d="M1.5,4 L1.5,13 A5.5,2.2 0 0 0 12.5,13 L12.5,4 Z" fill="#5cb82a" stroke="#2a6a10" stroke-width="0.9"/><path d="M1.5,8.5 A5.5,2.2 0 0 0 12.5,8.5" fill="none" stroke="#2a6a10" stroke-width="0.6"/><ellipse cx="7" cy="4" rx="5.5" ry="2.2" fill="#b8e880" stroke="#2a6a10" stroke-width="0.9"/></svg>
<svg class="ic" style="left:37px;top:148px" width="14" height="16" viewBox="0 0 14 16"><path d="M1.0,3 L1.0,13 A5.5,2.2 0 0 0 12.0,13 L12.0,3 Z" fill="#5cb82a" stroke="#2a6a10" stroke-width="0.9"/><path d="M1.0,8.0 A5.5,2.2 0 0 0 12.0,8.0" fill="none" stroke="#2a6a10" stroke-width="0.6"/><ellipse cx="6.5" cy="3" rx="5.5" ry="2.2" fill="#b8e880" stroke="#2a6a10" stroke-width="0.9"/></svg>
<svg class="ic" style="left:36px;top:166px" width="14" height="11" viewBox="0 0 14 11"><rect x="0.5" y="0.5" width="13" height="10" fill="#fff" stroke="#2c2c5c"/><rect x="1" y="1" width="12" height="2.6" fill="#5a5aa8"/><path d="M3,6h4M8.5,6h4M3,8.5h4M8.5,8.5h4" stroke="#8ab858" stroke-width="1.6"/><rect x="2" y="4.5" width="10" height="6" fill="none" stroke="#c8dca8" stroke-width="0.6"/></svg>
<span class="t b" style="left:38px;top:132px;letter-spacing:-0.45px;font-size:11px">SYSDB</span>
<span class="t " style="left:76px;top:132px;color:#2a2ab0;font-size:11px;letter-spacing:-0.2px">(Dialect 3)</span>
<span class="t b" style="left:53px;top:148px;font-size:11px;letter-spacing:0.2px">Domains</span>
<span class="t " style="left:106px;top:148px;color:#2a2ab0;font-size:11px">(56)</span>
<span class="t b" style="left:53px;top:164px;font-size:11px;letter-spacing:0.2px">Tables</span>
<span class="t " style="left:94px;top:164px;color:#2a2ab0;font-size:11px;letter-spacing:-0.1px">(1184)</span>
<div class="r" style="left:43px;top:188px;width:8px;height:1px;border-top:1px dotted #a0a0a0"></div>
<svg class="ic" style="left:52px;top:183px" width="14" height="11" viewBox="0 0 14 11"><rect x="0.5" y="0.5" width="13" height="10" fill="#fff" stroke="#2c2c5c"/><rect x="1" y="1" width="12" height="2.6" fill="#5a5aa8"/><path d="M3,6h4M8.5,6h4M3,8.5h4M8.5,8.5h4" stroke="#8ab858" stroke-width="1.6"/><rect x="2" y="4.5" width="10" height="6" fill="none" stroke="#c8dca8" stroke-width="0.6"/></svg>
<span class="t u" style="left:69px;top:180px;font-size:11px;letter-spacing:-0.6px">ADP_APOLICE</span>
<div class="r" style="left:43px;top:204px;width:8px;height:1px;border-top:1px dotted #a0a0a0"></div>
<svg class="ic" style="left:52px;top:199px" width="14" height="11" viewBox="0 0 14 11"><rect x="0.5" y="0.5" width="13" height="10" fill="#fff" stroke="#2c2c5c"/><rect x="1" y="1" width="12" height="2.6" fill="#5a5aa8"/><path d="M3,6h4M8.5,6h4M3,8.5h4M8.5,8.5h4" stroke="#8ab858" stroke-width="1.6"/><rect x="2" y="4.5" width="10" height="6" fill="none" stroke="#c8dca8" stroke-width="0.6"/></svg>
<span class="t u" style="left:69px;top:196px;font-size:11px;letter-spacing:-0.6px">ADP_APSXBENS</span>
<div class="r" style="left:43px;top:220px;width:8px;height:1px;border-top:1px dotted #a0a0a0"></div>
<svg class="ic" style="left:52px;top:215px" width="14" height="11" viewBox="0 0 14 11"><rect x="0.5" y="0.5" width="13" height="10" fill="#fff" stroke="#2c2c5c"/><rect x="1" y="1" width="12" height="2.6" fill="#5a5aa8"/><path d="M3,6h4M8.5,6h4M3,8.5h4M8.5,8.5h4" stroke="#8ab858" stroke-width="1.6"/><rect x="2" y="4.5" width="10" height="6" fill="none" stroke="#c8dca8" stroke-width="0.6"/></svg>
<span class="t u" style="left:69px;top:212px;font-size:11px;letter-spacing:-0.6px">ADP_APSXFRA</span>
<div class="r" style="left:43px;top:236px;width:8px;height:1px;border-top:1px dotted #a0a0a0"></div>
<svg class="ic" style="left:52px;top:231px" width="14" height="11" viewBox="0 0 14 11"><rect x="0.5" y="0.5" width="13" height="10" fill="#fff" stroke="#2c2c5c"/><rect x="1" y="1" width="12" height="2.6" fill="#5a5aa8"/><path d="M3,6h4M8.5,6h4M3,8.5h4M8.5,8.5h4" stroke="#8ab858" stroke-width="1.6"/><rect x="2" y="4.5" width="10" height="6" fill="none" stroke="#c8dca8" stroke-width="0.6"/></svg>
<span class="t u" style="left:69px;top:228px;font-size:11px;letter-spacing:-0.6px">ADP_APSXIMPSEG</span>
<div class="r" style="left:43px;top:252px;width:8px;height:1px;border-top:1px dotted #a0a0a0"></div>
<svg class="ic" style="left:52px;top:247px" width="14" height="11" viewBox="0 0 14 11"><rect x="0.5" y="0.5" width="13" height="10" fill="#fff" stroke="#2c2c5c"/><rect x="1" y="1" width="12" height="2.6" fill="#5a5aa8"/><path d="M3,6h4M8.5,6h4M3,8.5h4M8.5,8.5h4" stroke="#8ab858" stroke-width="1.6"/><rect x="2" y="4.5" width="10" height="6" fill="none" stroke="#c8dca8" stroke-width="0.6"/></svg>
<span class="t u" style="left:69px;top:244px;font-size:11px;letter-spacing:-0.6px">ADP_AUDIBENS</span>
<div class="r" style="left:43px;top:268px;width:8px;height:1px;border-top:1px dotted #a0a0a0"></div>
<svg class="ic" style="left:52px;top:263px" width="14" height="11" viewBox="0 0 14 11"><rect x="0.5" y="0.5" width="13" height="10" fill="#fff" stroke="#2c2c5c"/><rect x="1" y="1" width="12" height="2.6" fill="#5a5aa8"/><path d="M3,6h4M8.5,6h4M3,8.5h4M8.5,8.5h4" stroke="#8ab858" stroke-width="1.6"/><rect x="2" y="4.5" width="10" height="6" fill="none" stroke="#c8dca8" stroke-width="0.6"/></svg>
<span class="t u" style="left:69px;top:260px;font-size:11px;letter-spacing:-0.6px">ADP_AUDIMOV</span>
<div class="r" style="left:43px;top:284px;width:8px;height:1px;border-top:1px dotted #a0a0a0"></div>
<svg class="ic" style="left:52px;top:279px" width="14" height="11" viewBox="0 0 14 11"><rect x="0.5" y="0.5" width="13" height="10" fill="#fff" stroke="#2c2c5c"/><rect x="1" y="1" width="12" height="2.6" fill="#5a5aa8"/><path d="M3,6h4M8.5,6h4M3,8.5h4M8.5,8.5h4" stroke="#8ab858" stroke-width="1.6"/><rect x="2" y="4.5" width="10" height="6" fill="none" stroke="#c8dca8" stroke-width="0.6"/></svg>
<span class="t u" style="left:69px;top:276px;font-size:11px;letter-spacing:-0.6px">ADP_AUDITORIA</span>
<div class="r" style="left:43px;top:300px;width:8px;height:1px;border-top:1px dotted #a0a0a0"></div>
<svg class="ic" style="left:52px;top:295px" width="14" height="11" viewBox="0 0 14 11"><rect x="0.5" y="0.5" width="13" height="10" fill="#fff" stroke="#2c2c5c"/><rect x="1" y="1" width="12" height="2.6" fill="#5a5aa8"/><path d="M3,6h4M8.5,6h4M3,8.5h4M8.5,8.5h4" stroke="#8ab858" stroke-width="1.6"/><rect x="2" y="4.5" width="10" height="6" fill="none" stroke="#c8dca8" stroke-width="0.6"/></svg>
<span class="t u" style="left:69px;top:292px;font-size:11px;letter-spacing:-0.6px">ADP_BENS</span>
<div class="r" style="left:43px;top:316px;width:8px;height:1px;border-top:1px dotted #a0a0a0"></div>
<svg class="ic" style="left:52px;top:311px" width="14" height="11" viewBox="0 0 14 11"><rect x="0.5" y="0.5" width="13" height="10" fill="#fff" stroke="#2c2c5c"/><rect x="1" y="1" width="12" height="2.6" fill="#5a5aa8"/><path d="M3,6h4M8.5,6h4M3,8.5h4M8.5,8.5h4" stroke="#8ab858" stroke-width="1.6"/><rect x="2" y="4.5" width="10" height="6" fill="none" stroke="#c8dca8" stroke-width="0.6"/></svg>
<span class="t u" style="left:69px;top:308px;font-size:11px;letter-spacing:-0.6px">ADP_BENSXCC</span>
<div class="r" style="left:43px;top:332px;width:8px;height:1px;border-top:1px dotted #a0a0a0"></div>
<svg class="ic" style="left:52px;top:327px" width="14" height="11" viewBox="0 0 14 11"><rect x="0.5" y="0.5" width="13" height="10" fill="#fff" stroke="#2c2c5c"/><rect x="1" y="1" width="12" height="2.6" fill="#5a5aa8"/><path d="M3,6h4M8.5,6h4M3,8.5h4M8.5,8.5h4" stroke="#8ab858" stroke-width="1.6"/><rect x="2" y="4.5" width="10" height="6" fill="none" stroke="#c8dca8" stroke-width="0.6"/></svg>
<span class="t u" style="left:69px;top:324px;font-size:11px;letter-spacing:-0.6px">ADP_BENSXDESP</span>
<div class="r" style="left:43px;top:348px;width:8px;height:1px;border-top:1px dotted #a0a0a0"></div>
<svg class="ic" style="left:52px;top:343px" width="14" height="11" viewBox="0 0 14 11"><rect x="0.5" y="0.5" width="13" height="10" fill="#fff" stroke="#2c2c5c"/><rect x="1" y="1" width="12" height="2.6" fill="#5a5aa8"/><path d="M3,6h4M8.5,6h4M3,8.5h4M8.5,8.5h4" stroke="#8ab858" stroke-width="1.6"/><rect x="2" y="4.5" width="10" height="6" fill="none" stroke="#c8dca8" stroke-width="0.6"/></svg>
<span class="t u" style="left:69px;top:340px;font-size:11px;letter-spacing:-0.6px">ADP_BENSXNDEPR</span>
<div class="r" style="left:43px;top:364px;width:8px;height:1px;border-top:1px dotted #a0a0a0"></div>
<svg class="ic" style="left:52px;top:359px" width="14" height="11" viewBox="0 0 14 11"><rect x="0.5" y="0.5" width="13" height="10" fill="#fff" stroke="#2c2c5c"/><rect x="1" y="1" width="12" height="2.6" fill="#5a5aa8"/><path d="M3,6h4M8.5,6h4M3,8.5h4M8.5,8.5h4" stroke="#8ab858" stroke-width="1.6"/><rect x="2" y="4.5" width="10" height="6" fill="none" stroke="#c8dca8" stroke-width="0.6"/></svg>
<span class="t u" style="left:69px;top:356px;font-size:11px;letter-spacing:-0.6px">ADP_CONTA</span>
<div class="r" style="left:43px;top:380px;width:8px;height:1px;border-top:1px dotted #a0a0a0"></div>
<svg class="ic" style="left:52px;top:375px" width="14" height="11" viewBox="0 0 14 11"><rect x="0.5" y="0.5" width="13" height="10" fill="#fff" stroke="#2c2c5c"/><rect x="1" y="1" width="12" height="2.6" fill="#5a5aa8"/><path d="M3,6h4M8.5,6h4M3,8.5h4M8.5,8.5h4" stroke="#8ab858" stroke-width="1.6"/><rect x="2" y="4.5" width="10" height="6" fill="none" stroke="#c8dca8" stroke-width="0.6"/></svg>
<span class="t u" style="left:69px;top:372px;font-size:11px;letter-spacing:-0.6px">ADP_CONTAXCC</span>
<div class="r" style="left:43px;top:396px;width:8px;height:1px;border-top:1px dotted #a0a0a0"></div>
<svg class="ic" style="left:52px;top:391px" width="14" height="11" viewBox="0 0 14 11"><rect x="0.5" y="0.5" width="13" height="10" fill="#fff" stroke="#2c2c5c"/><rect x="1" y="1" width="12" height="2.6" fill="#5a5aa8"/><path d="M3,6h4M8.5,6h4M3,8.5h4M8.5,8.5h4" stroke="#8ab858" stroke-width="1.6"/><rect x="2" y="4.5" width="10" height="6" fill="none" stroke="#c8dca8" stroke-width="0.6"/></svg>
<span class="t u" style="left:69px;top:388px;font-size:11px;letter-spacing:-0.6px">ADP_CONVMONET</span>
<div class="r" style="left:43px;top:412px;width:8px;height:1px;border-top:1px dotted #a0a0a0"></div>
<svg class="ic" style="left:52px;top:407px" width="14" height="11" viewBox="0 0 14 11"><rect x="0.5" y="0.5" width="13" height="10" fill="#fff" stroke="#2c2c5c"/><rect x="1" y="1" width="12" height="2.6" fill="#5a5aa8"/><path d="M3,6h4M8.5,6h4M3,8.5h4M8.5,8.5h4" stroke="#8ab858" stroke-width="1.6"/><rect x="2" y="4.5" width="10" height="6" fill="none" stroke="#c8dca8" stroke-width="0.6"/></svg>
<span class="t u" style="left:69px;top:404px;font-size:11px;letter-spacing:-0.6px">ADP_ESPECIE</span>
<div class="r" style="left:43px;top:428px;width:8px;height:1px;border-top:1px dotted #a0a0a0"></div>
<svg class="ic" style="left:52px;top:423px" width="14" height="11" viewBox="0 0 14 11"><rect x="0.5" y="0.5" width="13" height="10" fill="#fff" stroke="#2c2c5c"/><rect x="1" y="1" width="12" height="2.6" fill="#5a5aa8"/><path d="M3,6h4M8.5,6h4M3,8.5h4M8.5,8.5h4" stroke="#8ab858" stroke-width="1.6"/><rect x="2" y="4.5" width="10" height="6" fill="none" stroke="#c8dca8" stroke-width="0.6"/></svg>
<span class="t u" style="left:69px;top:420px;font-size:11px;letter-spacing:-0.6px">ADP_FRANQUIA</span>
<div class="r" style="left:43px;top:444px;width:8px;height:1px;border-top:1px dotted #a0a0a0"></div>
<svg class="ic" style="left:52px;top:439px" width="14" height="11" viewBox="0 0 14 11"><rect x="0.5" y="0.5" width="13" height="10" fill="#fff" stroke="#2c2c5c"/><rect x="1" y="1" width="12" height="2.6" fill="#5a5aa8"/><path d="M3,6h4M8.5,6h4M3,8.5h4M8.5,8.5h4" stroke="#8ab858" stroke-width="1.6"/><rect x="2" y="4.5" width="10" height="6" fill="none" stroke="#c8dca8" stroke-width="0.6"/></svg>
<span class="t u" style="left:69px;top:436px;font-size:11px;letter-spacing:-0.6px">ADP_HISTORICO</span>
<div class="r" style="left:43px;top:460px;width:8px;height:1px;border-top:1px dotted #a0a0a0"></div>
<svg class="ic" style="left:52px;top:455px" width="14" height="11" viewBox="0 0 14 11"><rect x="0.5" y="0.5" width="13" height="10" fill="#fff" stroke="#2c2c5c"/><rect x="1" y="1" width="12" height="2.6" fill="#5a5aa8"/><path d="M3,6h4M8.5,6h4M3,8.5h4M8.5,8.5h4" stroke="#8ab858" stroke-width="1.6"/><rect x="2" y="4.5" width="10" height="6" fill="none" stroke="#c8dca8" stroke-width="0.6"/></svg>
<span class="t u" style="left:69px;top:452px;font-size:11px;letter-spacing:-0.6px">ADP_IMPSEG</span>
<div class="r" style="left:43px;top:476px;width:8px;height:1px;border-top:1px dotted #a0a0a0"></div>
<svg class="ic" style="left:52px;top:471px" width="14" height="11" viewBox="0 0 14 11"><rect x="0.5" y="0.5" width="13" height="10" fill="#fff" stroke="#2c2c5c"/><rect x="1" y="1" width="12" height="2.6" fill="#5a5aa8"/><path d="M3,6h4M8.5,6h4M3,8.5h4M8.5,8.5h4" stroke="#8ab858" stroke-width="1.6"/><rect x="2" y="4.5" width="10" height="6" fill="none" stroke="#c8dca8" stroke-width="0.6"/></svg>
<span class="t u" style="left:69px;top:468px;font-size:11px;letter-spacing:-0.6px">ADP_LOCALIZACAO</span>
<div class="r" style="left:43px;top:492px;width:8px;height:1px;border-top:1px dotted #a0a0a0"></div>
<svg class="ic" style="left:52px;top:487px" width="14" height="11" viewBox="0 0 14 11"><rect x="0.5" y="0.5" width="13" height="10" fill="#fff" stroke="#2c2c5c"/><rect x="1" y="1" width="12" height="2.6" fill="#5a5aa8"/><path d="M3,6h4M8.5,6h4M3,8.5h4M8.5,8.5h4" stroke="#8ab858" stroke-width="1.6"/><rect x="2" y="4.5" width="10" height="6" fill="none" stroke="#c8dca8" stroke-width="0.6"/></svg>
<span class="t u" style="left:69px;top:484px;font-size:11px;letter-spacing:-0.6px">ADP_LOCXRESP</span>
<div class="r" style="left:43px;top:508px;width:8px;height:1px;border-top:1px dotted #a0a0a0"></div>
<svg class="ic" style="left:52px;top:503px" width="14" height="11" viewBox="0 0 14 11"><rect x="0.5" y="0.5" width="13" height="10" fill="#fff" stroke="#2c2c5c"/><rect x="1" y="1" width="12" height="2.6" fill="#5a5aa8"/><path d="M3,6h4M8.5,6h4M3,8.5h4M8.5,8.5h4" stroke="#8ab858" stroke-width="1.6"/><rect x="2" y="4.5" width="10" height="6" fill="none" stroke="#c8dca8" stroke-width="0.6"/></svg>
<span class="t u" style="left:69px;top:500px;font-size:11px;letter-spacing:-0.6px">ADP_LOCXUSR</span>
<div class="r" style="left:43px;top:524px;width:8px;height:1px;border-top:1px dotted #a0a0a0"></div>
<svg class="ic" style="left:52px;top:519px" width="14" height="11" viewBox="0 0 14 11"><rect x="0.5" y="0.5" width="13" height="10" fill="#fff" stroke="#2c2c5c"/><rect x="1" y="1" width="12" height="2.6" fill="#5a5aa8"/><path d="M3,6h4M8.5,6h4M3,8.5h4M8.5,8.5h4" stroke="#8ab858" stroke-width="1.6"/><rect x="2" y="4.5" width="10" height="6" fill="none" stroke="#c8dca8" stroke-width="0.6"/></svg>
<span class="t u" style="left:69px;top:516px;font-size:11px;letter-spacing:-0.6px">ADP_MODINGRESSO</span>
<div class="r" style="left:43px;top:540px;width:8px;height:1px;border-top:1px dotted #a0a0a0"></div>
<svg class="ic" style="left:52px;top:535px" width="14" height="11" viewBox="0 0 14 11"><rect x="0.5" y="0.5" width="13" height="10" fill="#fff" stroke="#2c2c5c"/><rect x="1" y="1" width="12" height="2.6" fill="#5a5aa8"/><path d="M3,6h4M8.5,6h4M3,8.5h4M8.5,8.5h4" stroke="#8ab858" stroke-width="1.6"/><rect x="2" y="4.5" width="10" height="6" fill="none" stroke="#c8dca8" stroke-width="0.6"/></svg>
<span class="t u" style="left:69px;top:532px;font-size:11px;letter-spacing:-0.6px">ADP_MOVBENS</span>
<div class="r" style="left:43px;top:556px;width:8px;height:1px;border-top:1px dotted #a0a0a0"></div>
<svg class="ic" style="left:52px;top:551px" width="14" height="11" viewBox="0 0 14 11"><rect x="0.5" y="0.5" width="13" height="10" fill="#fff" stroke="#2c2c5c"/><rect x="1" y="1" width="12" height="2.6" fill="#5a5aa8"/><path d="M3,6h4M8.5,6h4M3,8.5h4M8.5,8.5h4" stroke="#8ab858" stroke-width="1.6"/><rect x="2" y="4.5" width="10" height="6" fill="none" stroke="#c8dca8" stroke-width="0.6"/></svg>
<span class="t u" style="left:69px;top:548px;font-size:11px;letter-spacing:-0.6px">ADP_MOVCC</span>
<div class="r" style="left:3px;top:562px;width:273px;height:3px;background:#8f8f8f"></div>
<div class="r" style="left:3px;top:572px;width:260px;height:1px;background:#a0a0a0"></div>
<div class="r" style="left:3px;top:573px;width:260px;height:1px;background:#fff"></div>
<div class="r" style="left:3px;top:575px;width:260px;height:1px;background:#a0a0a0"></div>
<div class="r" style="left:3px;top:576px;width:260px;height:1px;background:#fff"></div>
<span class="t" style="left:265px;top:565px;font-size:11px;font-weight:bold">&#x2715;</span>
<div class="r" style="left:4px;top:581px;width:270px;height:18px;background:#a0a0a0"></div>
<span class="t " style="left:7px;top:582px;font-size:11px;letter-spacing:-0.9px">SYSDB</span>
<div class="r" style="left:4px;top:600px;width:270px;height:22px;background:#fff"></div>
<div class="r" style="left:9px;top:601px;width:59px;height:20px;background:#ececec"></div>
<div class="r" style="left:68px;top:601px;width:1px;height:19px;background:#000"></div>
<span class="t " style="left:14px;top:604px;letter-spacing:-0.1px">Properties</span>
<span class="t " style="left:74px;top:604px;letter-spacing:-0.2px">Active Users</span>
<div class="r" style="left:4px;top:622px;width:254px;height:150px;background:#fff;border-top:1px solid #a0a0a0;border-left:1px solid #a0a0a0"></div>
<div class="r" style="left:5px;top:623px;width:253px;height:17px;background:#ececec"></div>
<div class="r" style="left:5px;top:640px;width:253px;height:1px;background:#d8d8d8"></div>
<div class="r" style="left:5px;top:657px;width:253px;height:1px;background:#d8d8d8"></div>
<div class="r" style="left:5px;top:674px;width:253px;height:1px;background:#d8d8d8"></div>
<div class="r" style="left:5px;top:691px;width:253px;height:1px;background:#d8d8d8"></div>
<div class="r" style="left:5px;top:708px;width:253px;height:1px;background:#d8d8d8"></div>
<div class="r" style="left:5px;top:725px;width:253px;height:1px;background:#d8d8d8"></div>
<div class="r" style="left:5px;top:742px;width:253px;height:1px;background:#d8d8d8"></div>
<div class="r" style="left:5px;top:759px;width:253px;height:1px;background:#d8d8d8"></div>
<div class="r" style="left:5px;top:776px;width:253px;height:1px;background:#d8d8d8"></div>
<div class="r" style="left:80px;top:623px;width:1px;height:148px;background:#d8d8d8"></div>
<span class="t " style="left:7px;top:624px;letter-spacing:-0.1px">Property</span>
<span class="t " style="left:83px;top:624px;">Value</span>
<span class="t b" style="left:7px;top:641px;letter-spacing:0.45px">Server Ver...</span>
<span class="t " style="left:83px;top:641px;letter-spacing:-0.1px">WI-V6.3.2.26540 Firebird 2.5</span>
<span class="t b" style="left:7px;top:658px;letter-spacing:0.45px">ODS Version</span>
<span class="t " style="left:83px;top:658px;letter-spacing:-0.1px">11.2</span>
<span class="t b" style="left:7px;top:675px;letter-spacing:0.45px">Page Size</span>
<span class="t " style="left:83px;top:675px;letter-spacing:-0.1px">4096</span>
<span class="t b" style="left:7px;top:692px;letter-spacing:0.45px">Pages Allo...</span>
<span class="t " style="left:83px;top:692px;letter-spacing:-0.1px">141748</span>
<span class="t b" style="left:7px;top:709px;letter-spacing:0.45px">DB File Size</span>
<span class="t " style="left:83px;top:709px;letter-spacing:-0.1px">553 MB</span>
<span class="t b" style="left:7px;top:726px;letter-spacing:0.45px">Server</span>
<span class="t " style="left:83px;top:726px;letter-spacing:-0.1px"></span>
<span class="t b" style="left:7px;top:743px;letter-spacing:0.45px">Database F...</span>
<span class="t " style="left:83px;top:743px;letter-spacing:-0.1px">C:\syspro\bd\SYSDB.FBD</span>
<span class="t b" style="left:7px;top:760px;letter-spacing:0.45px">Client Libra...</span>
<span class="t " style="left:83px;top:760px;letter-spacing:-0.1px">C:\Windows\system32\gds32.dll</span>
<div class="r" style="left:4px;top:768px;width:254px;height:6px;background:#f0f0f0"></div>
<div class="r" style="left:258px;top:623px;width:18px;height:148px;background:#f0f0f0"></div>
<svg class="ic" style="left:262px;top:629px" width="7" height="5" viewBox="0 0 7 5"><path d="M0,4.5 L3.5,0 L7,4.5z" fill="#404040"/></svg>
<svg class="ic" style="left:262px;top:762px" width="7" height="5" viewBox="0 0 7 5"><path d="M0,0 L3.5,4.5 L7,0z" fill="#404040"/></svg>
<div class="r" style="left:258px;top:641px;width:14px;height:66px;background:linear-gradient(90deg,#f8f8f8,#d4d4d4);border:1px solid #9a9a9a;border-radius:2px"></div>
<div class="r" style="left:262px;top:670px;width:6px;height:1px;background:#777"></div>
<div class="r" style="left:262px;top:673px;width:6px;height:1px;background:#777"></div>
<div class="r" style="left:262px;top:676px;width:6px;height:1px;background:#777"></div>
<div class="r" style="left:4px;top:774px;width:270px;height:21px;background:#fff"></div>
<div class="r" style="left:10px;top:775px;width:75px;height:18px;background:#ececec;border-bottom:1px solid #000"></div>
<div class="r" style="left:4px;top:774px;width:6px;height:1px;background:#000"></div>
<div class="r" style="left:85px;top:774px;width:1px;height:20px;background:#000"></div>
<div class="r" style="left:86px;top:774px;width:187px;height:1px;background:#000"></div>
<span class="t " style="left:14px;top:775px;letter-spacing:-0.1px">SQL Assistant</span>
<span class="t " style="left:90px;top:775px;letter-spacing:-0.2px">Dynamic Help</span>
<div class="r" style="left:276px;top:71px;width:5px;height:730px;background:#f0f0f0"></div>
<!--RIGHT-->
<div class="r" style="left:281px;top:71px;width:1159px;height:730px;background:#f0f0f0"></div>
<div class="r" style="left:281px;top:71px;width:1159px;height:26px;background:#f0f0f0"></div>
<div class="r" style="left:281px;top:96px;width:1159px;height:1px;background:#a8a8a8"></div>
<div class="r" style="left:283px;top:74px;width:1px;height:20px;background:#a0a0a0"></div>
<div class="r" style="left:284px;top:74px;width:1px;height:20px;background:#fff"></div>
<span class="t " style="left:295px;top:76px;font-size:12px;letter-spacing:-0.1px">Table</span>
<svg class="ic" style="left:328px;top:82px" width="6" height="3" viewBox="0 0 6 3"><path d="M0,0h6l-3,3z" fill="#000"/></svg>
<div class="r" style="left:342px;top:73px;width:1px;height:22px;background:#c8c8c8"></div>
<div class="r" style="left:343px;top:73px;width:1px;height:22px;background:#fff"></div>
<svg class="ic" style="left:350px;top:75px" width="16" height="16" viewBox="0 0 16 16"><path d="M9,1 L3,9 L7,9 L4,15 L13,6 L9,6 L12,1z" fill="#f8f8f8" stroke="#a8a8a8" stroke-width="1"/></svg>
<div class="r" style="left:371px;top:73px;width:1px;height:22px;background:#c8c8c8"></div>
<div class="r" style="left:372px;top:73px;width:1px;height:22px;background:#fff"></div>
<svg class="ic" style="left:379px;top:75px" width="16" height="16" viewBox="0 0 16 16"><g shape-rendering="crispEdges"><rect x="1.5" y="5.5" width="13" height="10" fill="#c8e8a8" stroke="#0a2a0a" stroke-width="1.2"/><path d="M1,9h14M1,12h14M5.5,5v11M10,5v11" stroke="#0a2a0a" stroke-width="1"/></g><path d="M8,10 L12,2 L14,3 L10,11z" fill="#f0e040" stroke="#222" stroke-width="0.8"/><circle cx="13" cy="2" r="1.3" fill="#111"/></svg>
<div class="r" style="left:400px;top:73px;width:1px;height:22px;background:#c8c8c8"></div>
<div class="r" style="left:401px;top:73px;width:1px;height:22px;background:#fff"></div>
<svg class="ic" style="left:407px;top:75px" width="17" height="17" viewBox="0 0 17 17"><path d="M0.5,2.8h6.5M0.5,8.5h6.5M0.5,14.2h6.5M6.5,2v13" stroke="#000" stroke-width="1.5" fill="none"/><rect x="10.5" y="10.5" width="5" height="4" fill="#8a7ad0" stroke="#222a6a"/><path d="M6,12.5 l3,-2.5 v5z" fill="#111"/><path d="M8,12.5 h3" stroke="#111" stroke-width="1.2"/></svg>
<svg class="ic" style="left:430px;top:75px" width="17" height="17" viewBox="0 0 17 17"><path d="M0.5,2.8h6.5M0.5,8.5h6.5M0.5,14.2h6.5M6.5,2v13" stroke="#000" stroke-width="1.5" fill="none"/><rect x="2.5" y="6.5" width="9" height="4" fill="#9a8ae0" stroke="#6a5ab8"/><path d="M16,8.5 l-4,-3 v6z" fill="#111"/></svg>
<svg class="ic" style="left:454px;top:75px" width="17" height="17" viewBox="0 0 17 17"><path d="M0.5,2.8h6.5M0.5,8.5h6.5M0.5,14.2h6.5M6.5,2v13" stroke="#000" stroke-width="1.5" fill="none"/><rect x="0.5" y="6.5" width="6" height="4" fill="#9a8ae0"/><path d="M12,2 l-3,4 h6z" fill="#111"/><path d="M12,5 v7" stroke="#111" stroke-width="1.4"/></svg>
<svg class="ic" style="left:475px;top:75px" width="17" height="17" viewBox="0 0 17 17"><path d="M0.5,2.8h6.5M0.5,8.5h6.5M0.5,14.2h6.5M6.5,2v13" stroke="#000" stroke-width="1.5" fill="none"/><rect x="0.5" y="6.5" width="6" height="4" fill="#9a8ae0"/><path d="M12,15 l-3,-4 h6z" fill="#111"/><path d="M12,5 v7" stroke="#111" stroke-width="1.4"/></svg>
<div class="r" style="left:499px;top:73px;width:1px;height:22px;background:#c8c8c8"></div>
<div class="r" style="left:500px;top:73px;width:1px;height:22px;background:#fff"></div>
<svg class="ic" style="left:505px;top:75px" width="16" height="16" viewBox="0 0 16 16"><path d="M2,8 L6,13 L14,3" stroke="#28b028" stroke-width="2.6" fill="none"/></svg>
<svg class="ic" style="left:527px;top:82px" width="6" height="3" viewBox="0 0 6 3"><path d="M0,0h6l-3,3z" fill="#000"/></svg>
<svg class="ic" style="left:539px;top:75px" width="16" height="16" viewBox="0 0 16 16"><path d="M2,2 L14,14 M14,2 L2,14" stroke="#c8343c" stroke-width="2"/></svg>
<svg class="ic" style="left:561px;top:82px" width="6" height="3" viewBox="0 0 6 3"><path d="M0,0h6l-3,3z" fill="#000"/></svg>
<div class="r" style="left:572px;top:73px;width:1px;height:22px;background:#c8c8c8"></div>
<div class="r" style="left:573px;top:73px;width:1px;height:22px;background:#fff"></div>
<svg class="ic" style="left:579px;top:75px" width="16" height="16" viewBox="0 0 16 16"><rect x="1" y="1" width="12" height="11" fill="#fff" stroke="#1a1a6a"/><rect x="1" y="1" width="12" height="3" fill="#2a2a8a"/><path d="M1,6.5h12M1,9h12M5,4v8M9,4v8" stroke="#2a2a8a" stroke-width="0.8"/><path d="M12,12 l4,0 l-2,3z" fill="#d82020"/></svg>
<svg class="ic" style="left:601px;top:75px" width="18" height="17" viewBox="0 0 18 17"><rect x="1" y="1" width="14" height="13" fill="#fff" stroke="#1a1a6a"/><rect x="1" y="1" width="14" height="3" fill="#2a2a8a"/><path d="M1,6.5h14M1,9h14M1,11.5h14M5,4v10M9,4v10" stroke="#2a2a8a" stroke-width="0.8"/><path d="M13,13 l4,0 l-2,3z" fill="#d82020"/></svg>
<div class="r" style="left:625px;top:73px;width:1px;height:22px;background:#c8c8c8"></div>
<div class="r" style="left:626px;top:73px;width:1px;height:22px;background:#fff"></div>
<svg class="ic" style="left:631px;top:75px" width="16" height="16" viewBox="0 0 16 16"><rect x="4" y="1.5" width="8" height="6" fill="#c8e0c8" stroke="#333"/><rect x="1.5" y="7" width="13" height="6" rx="1" fill="#d8d8d8" stroke="#333"/><rect x="3" y="11" width="10" height="3" fill="#fff" stroke="#333" stroke-width="0.8"/></svg>
<div class="r" style="left:654px;top:73px;width:1px;height:22px;background:#c8c8c8"></div>
<div class="r" style="left:655px;top:73px;width:1px;height:22px;background:#fff"></div>
<svg class="ic" style="left:660px;top:75px" width="16" height="16" viewBox="0 0 16 16"><circle cx="11" cy="5.5" r="3.5" fill="#7a6ad8"/><circle cx="5.5" cy="11" r="3.5" fill="#4ab83a"/><circle cx="11" cy="11.5" r="2.5" fill="#9a8ae8"/><g stroke="#e85020" stroke-width="1.1"><path d="M-0.2999999999999998,3.5 h7.6 M3.5,-0.2999999999999998 v7.6 M0.7999999999999998,0.7999999999999998 l5.4,5.4 M6.2,0.7999999999999998 l-5.4,5.4"/></g></svg>
<svg class="ic" style="left:682px;top:75px" width="16" height="16" viewBox="0 0 16 16"><rect x="6" y="2" width="5" height="4" fill="#c8e8a0" stroke="#3a7a1a"/><rect x="2" y="10" width="5" height="5" fill="#c8e8a0" stroke="#3a7a1a"/><rect x="10" y="10" width="5" height="5" fill="#c8e8a0" stroke="#3a7a1a"/><path d="M8.5,6v2M4.5,8h8M4.5,8v2M12.5,8v2" stroke="#3a7a1a"/><g stroke="#e85020" stroke-width="1.1"><path d="M-0.2999999999999998,3.5 h7.6 M3.5,-0.2999999999999998 v7.6 M0.7999999999999998,0.7999999999999998 l5.4,5.4 M6.2,0.7999999999999998 l-5.4,5.4"/></g></svg>
<div class="r" style="left:706px;top:73px;width:1px;height:22px;background:#c8c8c8"></div>
<div class="r" style="left:707px;top:73px;width:1px;height:22px;background:#fff"></div>
<svg class="ic" style="left:713px;top:75px" width="16" height="16" viewBox="0 0 16 16"><g shape-rendering="crispEdges"><rect x="0.5" y="1.5" width="14" height="11" fill="#f4f4f4" stroke="#555"/><path d="M1,5.5h14M1,9.5h14M5.5,2v11M10.5,2v11" stroke="#8a8aa8"/></g><path d="M4,9 L9,4 L12,7 L7,12z" fill="#b02030" stroke="#300" stroke-width="0.8"/><path d="M9,9 L12,7 L15,11 L12,14z" fill="#fff" stroke="#222" stroke-width="1"/></svg>
<div class="r" style="left:734px;top:73px;width:1px;height:22px;background:#c8c8c8"></div>
<div class="r" style="left:735px;top:73px;width:1px;height:22px;background:#fff"></div>
<span class="t " style="left:742px;top:76px;font-size:12px;letter-spacing:-0.05px">Get record count</span>
<div class="r" style="left:836px;top:73px;width:1px;height:22px;background:#c8c8c8"></div>
<div class="r" style="left:837px;top:73px;width:1px;height:22px;background:#fff"></div>
<div class="r" style="left:840px;top:72px;width:599px;height:24px;background:#f5f5f5"></div>
<div class="r" style="left:843px;top:75px;width:572px;height:18px;background:#fff"></div>
<div class="r" style="left:1415px;top:75px;width:10px;height:18px;background:#f0f0f0"></div>
<div class="r" style="left:1439px;top:71px;width:1px;height:26px;background:#a0a0a0"></div>
<span class="t " style="left:846px;top:76px;font-size:12px;letter-spacing:-0.5px">GAT_ATENDXMOV</span>
<svg class="ic" style="left:1416px;top:81px" width="6" height="3" viewBox="0 0 6 3"><path d="M0,0h6l-3,3z" fill="#000"/></svg>
<svg class="ic" style="left:1429px;top:87px" width="6" height="3" viewBox="0 0 6 3"><path d="M0,0h6l-3,3z" fill="#000"/></svg>
<div class="r" style="left:281px;top:97px;width:1159px;height:23px;background:#fff"></div>
<div class="r" style="left:286px;top:100px;width:44px;height:19px;background:#ececec"></div>
<div class="r" style="left:330px;top:100px;width:1px;height:18px;background:#000"></div>
<span class="t " style="left:295px;top:102px;font-size:12px;letter-spacing:-0.55px"><u>F</u>ields</span>
<span class="t " style="left:338px;top:102px;font-size:12px;letter-spacing:-0.55px"><u>C</u>onstraints</span>
<span class="t " style="left:410px;top:102px;font-size:12px;letter-spacing:-0.55px">In<u>d</u>ices</span>
<span class="t " style="left:461px;top:102px;font-size:12px;letter-spacing:-0.55px">Dep<u>e</u>ndencies</span>
<span class="t " style="left:545px;top:102px;font-size:12px;letter-spacing:-0.55px">T<u>r</u>iggers</span>
<span class="t " style="left:601px;top:102px;font-size:12px;letter-spacing:-0.55px">D<u>a</u>ta</span>
<span class="t " style="left:638px;top:102px;font-size:12px;letter-spacing:-0.55px">Master/Detail View</span>
<span class="t " style="left:740px;top:102px;font-size:12px;letter-spacing:-0.55px">Description</span>
<span class="t " style="left:810px;top:102px;font-size:12px;letter-spacing:-0.55px">DD<u>L</u></span>
<span class="t " style="left:846px;top:102px;font-size:12px;letter-spacing:-0.55px"><u>G</u>rants</span>
<span class="t " style="left:892px;top:102px;font-size:12px;letter-spacing:-0.55px">Logging</span>
<span class="t " style="left:939px;top:102px;font-size:12px;letter-spacing:-0.55px">Comparison</span>
<span class="t " style="left:1005px;top:102px;font-size:12px;letter-spacing:-0.55px">To-do</span>
<div class="r" style="left:401px;top:100px;width:1px;height:18px;background:#f2f2f2"></div>
<div class="r" style="left:452px;top:100px;width:1px;height:18px;background:#f2f2f2"></div>
<div class="r" style="left:537px;top:100px;width:1px;height:18px;background:#f2f2f2"></div>
<div class="r" style="left:592px;top:100px;width:1px;height:18px;background:#f2f2f2"></div>
<div class="r" style="left:630px;top:100px;width:1px;height:18px;background:#f2f2f2"></div>
<div class="r" style="left:733px;top:100px;width:1px;height:18px;background:#f2f2f2"></div>
<div class="r" style="left:801px;top:100px;width:1px;height:18px;background:#f2f2f2"></div>
<div class="r" style="left:837px;top:100px;width:1px;height:18px;background:#f2f2f2"></div>
<div class="r" style="left:883px;top:100px;width:1px;height:18px;background:#f2f2f2"></div>
<div class="r" style="left:931px;top:100px;width:1px;height:18px;background:#f2f2f2"></div>
<div class="r" style="left:999px;top:100px;width:1px;height:18px;background:#f2f2f2"></div>
<div class="r" style="left:1037px;top:100px;width:1px;height:18px;background:#f2f2f2"></div>
<div class="r" style="left:281px;top:120px;width:1159px;height:19px;background:#a0a0a0"></div>
<span class="t b" style="left:284px;top:121px;letter-spacing:0px">ATMV_TXT_CONSULTA BLOB SUB_TYPE 1 SEGMENT SIZE 80 CHARACTER SET ISO8859_1</span>
<div class="r" style="left:281px;top:139px;width:1159px;height:522px;background:#fff;border-left:1px solid #a0a0a0"></div>
<div class="r" style="left:282px;top:139px;width:1091px;height:18px;background:#f0f0f0;border-bottom:1px solid #a8a8a8"></div>
<span class="t " style="left:285px;top:139px;letter-spacing:-0.25px">#</span>
<span class="t " style="left:308px;top:139px;letter-spacing:-0.25px">PK</span>
<span class="t " style="left:329px;top:139px;letter-spacing:-0.25px">FK</span>
<span class="t " style="left:350px;top:139px;letter-spacing:-0.25px">UNQ</span>
<span class="t " style="left:379px;top:139px;letter-spacing:-0.25px">Field Name</span>
<span class="t " style="left:549px;top:139px;letter-spacing:-0.25px">Field Type</span>
<span class="t " style="left:628px;top:139px;letter-spacing:-0.25px">Domain</span>
<span class="t " style="left:730px;top:139px;letter-spacing:-0.25px">Size</span>
<span class="t " style="left:775px;top:139px;letter-spacing:-0.25px">Scale</span>
<span class="t " style="left:812px;top:139px;letter-spacing:-0.25px">Subtype</span>
<span class="t " style="left:861px;top:139px;letter-spacing:-0.25px">Array</span>
<span class="t " style="left:913px;top:139px;letter-spacing:-0.25px">Not Null</span>
<span class="t " style="left:963px;top:139px;letter-spacing:-0.25px">Charset</span>
<span class="t " style="left:1051px;top:139px;letter-spacing:-0.25px">Collate</span>
<span class="t " style="left:1140px;top:139px;letter-spacing:-0.25px">Descript...</span>
<span class="t " style="left:1198px;top:139px;letter-spacing:-0.25px">Computed Source</span>
<span class="t " style="left:1298px;top:139px;letter-spacing:-0.25px">Default Source</span>
<div class="r" style="left:305px;top:140px;width:1px;height:15px;background:#c8c8c8"></div>
<div class="r" style="left:326px;top:140px;width:1px;height:15px;background:#c8c8c8"></div>
<div class="r" style="left:347px;top:140px;width:1px;height:15px;background:#c8c8c8"></div>
<div class="r" style="left:376px;top:140px;width:1px;height:15px;background:#c8c8c8"></div>
<div class="r" style="left:546px;top:140px;width:1px;height:15px;background:#c8c8c8"></div>
<div class="r" style="left:625px;top:140px;width:1px;height:15px;background:#c8c8c8"></div>
<div class="r" style="left:727px;top:140px;width:1px;height:15px;background:#c8c8c8"></div>
<div class="r" style="left:772px;top:140px;width:1px;height:15px;background:#c8c8c8"></div>
<div class="r" style="left:809px;top:140px;width:1px;height:15px;background:#c8c8c8"></div>
<div class="r" style="left:858px;top:140px;width:1px;height:15px;background:#c8c8c8"></div>
<div class="r" style="left:910px;top:140px;width:1px;height:15px;background:#c8c8c8"></div>
<div class="r" style="left:960px;top:140px;width:1px;height:15px;background:#c8c8c8"></div>
<div class="r" style="left:1048px;top:140px;width:1px;height:15px;background:#c8c8c8"></div>
<div class="r" style="left:1137px;top:140px;width:1px;height:15px;background:#c8c8c8"></div>
<div class="r" style="left:1195px;top:140px;width:1px;height:15px;background:#c8c8c8"></div>
<div class="r" style="left:1295px;top:140px;width:1px;height:15px;background:#c8c8c8"></div>
<div class="r" style="left:1373px;top:140px;width:1px;height:15px;background:#c8c8c8"></div>
<div class="r" style="left:282px;top:173px;width:1091px;height:1px;background:#f1f1f1"></div>
<div class="r" style="left:282px;top:190px;width:1091px;height:1px;background:#f1f1f1"></div>
<div class="r" style="left:282px;top:207px;width:1091px;height:1px;background:#f1f1f1"></div>
<div class="r" style="left:282px;top:224px;width:1091px;height:1px;background:#f1f1f1"></div>
<div class="r" style="left:282px;top:241px;width:1091px;height:1px;background:#f1f1f1"></div>
<div class="r" style="left:282px;top:258px;width:1091px;height:1px;background:#f1f1f1"></div>
<div class="r" style="left:282px;top:275px;width:1091px;height:1px;background:#f1f1f1"></div>
<div class="r" style="left:282px;top:292px;width:1091px;height:1px;background:#f1f1f1"></div>
<div class="r" style="left:282px;top:309px;width:1091px;height:1px;background:#f1f1f1"></div>
<div class="r" style="left:282px;top:326px;width:1091px;height:1px;background:#f1f1f1"></div>
<div class="r" style="left:282px;top:343px;width:1091px;height:1px;background:#f1f1f1"></div>
<div class="r" style="left:282px;top:360px;width:1091px;height:1px;background:#f1f1f1"></div>
<div class="r" style="left:282px;top:377px;width:1091px;height:1px;background:#f1f1f1"></div>
<div class="r" style="left:282px;top:394px;width:1091px;height:1px;background:#f1f1f1"></div>
<div class="r" style="left:282px;top:411px;width:1091px;height:1px;background:#f1f1f1"></div>
<div class="r" style="left:282px;top:428px;width:1091px;height:1px;background:#f1f1f1"></div>
<span class="t " style="left:285px;top:157px;color:#000;width:17px;text-align:right">1</span>
<svg class="ic" style="left:309px;top:159px" width="14" height="16" viewBox="0 0 14 16"><circle cx="3.8" cy="3.8" r="3" fill="#e4e8a0" stroke="#1a1a10" stroke-width="1.3"/><circle cx="3.8" cy="3.6" r="0.8" fill="#1a1a10"/><path d="M3.8,6.8 v6.2" stroke="#1a1a10" stroke-width="1.6"/><path d="M3.8,9.5 l1.6,0.8 l-1.6,0.8" stroke="#1a1a10" stroke-width="1" fill="none"/><text x="6.6" y="13" font-size="9.5" font-family="Liberation Sans" fill="#000">1</text></svg>
<svg class="ic" style="left:331px;top:159px" width="14" height="16" viewBox="0 0 14 16"><circle cx="3.8" cy="3.8" r="3" fill="#e4e8a0" stroke="#1a1a10" stroke-width="1.3"/><circle cx="3.8" cy="3.6" r="0.8" fill="#1a1a10"/><path d="M3.8,6.8 v6.2" stroke="#1a1a10" stroke-width="1.6"/><path d="M3.8,9.5 l1.6,0.8 l-1.6,0.8" stroke="#1a1a10" stroke-width="1" fill="none"/><path d="M7.5,13.5 v-6 h3.5 M7.5,10.2 h3" stroke="#000" stroke-width="1.5" fill="none"/></svg>
<span class="t u" style="left:379px;top:157px;color:#000;letter-spacing:-0.65px">ATMV_CODEMP</span>
<span class="t u" style="left:548px;top:157px;color:#000;letter-spacing:-0.7px">INTEGER</span>
<svg class="ic" style="left:931px;top:160px" width="11" height="11" viewBox="0 0 11 11"><rect x="0.5" y="0.5" width="10" height="10" fill="#fff" stroke="#000"/><path d="M2.5,2.5 L8.5,8.5 M8.5,2.5 L2.5,8.5" stroke="#000" stroke-width="1.8"/></svg>
<span class="t " style="left:285px;top:174px;color:#000;width:17px;text-align:right">2</span>
<svg class="ic" style="left:309px;top:176px" width="14" height="16" viewBox="0 0 14 16"><circle cx="3.8" cy="3.8" r="3" fill="#e4e8a0" stroke="#1a1a10" stroke-width="1.3"/><circle cx="3.8" cy="3.6" r="0.8" fill="#1a1a10"/><path d="M3.8,6.8 v6.2" stroke="#1a1a10" stroke-width="1.6"/><path d="M3.8,9.5 l1.6,0.8 l-1.6,0.8" stroke="#1a1a10" stroke-width="1" fill="none"/><text x="6.6" y="13" font-size="9.5" font-family="Liberation Sans" fill="#000">2</text></svg>
<svg class="ic" style="left:331px;top:176px" width="14" height="16" viewBox="0 0 14 16"><circle cx="3.8" cy="3.8" r="3" fill="#e4e8a0" stroke="#1a1a10" stroke-width="1.3"/><circle cx="3.8" cy="3.6" r="0.8" fill="#1a1a10"/><path d="M3.8,6.8 v6.2" stroke="#1a1a10" stroke-width="1.6"/><path d="M3.8,9.5 l1.6,0.8 l-1.6,0.8" stroke="#1a1a10" stroke-width="1" fill="none"/><path d="M7.5,13.5 v-6 h3.5 M7.5,10.2 h3" stroke="#000" stroke-width="1.5" fill="none"/></svg>
<span class="t u" style="left:379px;top:174px;color:#000;letter-spacing:-0.65px">ATMV_ATCOD</span>
<span class="t u" style="left:548px;top:174px;color:#000;letter-spacing:-0.7px">INTEGER</span>
<svg class="ic" style="left:931px;top:177px" width="11" height="11" viewBox="0 0 11 11"><rect x="0.5" y="0.5" width="10" height="10" fill="#fff" stroke="#000"/><path d="M2.5,2.5 L8.5,8.5 M8.5,2.5 L2.5,8.5" stroke="#000" stroke-width="1.8"/></svg>
<span class="t " style="left:285px;top:191px;color:#000;width:17px;text-align:right">3</span>
<svg class="ic" style="left:309px;top:193px" width="14" height="16" viewBox="0 0 14 16"><circle cx="3.8" cy="3.8" r="3" fill="#e4e8a0" stroke="#1a1a10" stroke-width="1.3"/><circle cx="3.8" cy="3.6" r="0.8" fill="#1a1a10"/><path d="M3.8,6.8 v6.2" stroke="#1a1a10" stroke-width="1.6"/><path d="M3.8,9.5 l1.6,0.8 l-1.6,0.8" stroke="#1a1a10" stroke-width="1" fill="none"/><text x="6.6" y="13" font-size="9.5" font-family="Liberation Sans" fill="#000">3</text></svg>
<span class="t u" style="left:379px;top:191px;color:#000;letter-spacing:-0.65px">ATMV_COD</span>
<span class="t u" style="left:548px;top:191px;color:#000;letter-spacing:-0.7px">INTEGER</span>
<svg class="ic" style="left:931px;top:194px" width="11" height="11" viewBox="0 0 11 11"><rect x="0.5" y="0.5" width="10" height="10" fill="#fff" stroke="#000"/><path d="M2.5,2.5 L8.5,8.5 M8.5,2.5 L2.5,8.5" stroke="#000" stroke-width="1.8"/></svg>
<span class="t " style="left:285px;top:208px;color:#000;width:17px;text-align:right">4</span>
<span class="t u" style="left:379px;top:208px;color:#000;letter-spacing:-0.65px">ATMV_TXT</span>
<span class="t u" style="left:548px;top:208px;color:#000;letter-spacing:-0.7px">BLOB</span>
<span class="t " style="left:730px;top:208px;color:#000;width:39px;text-align:right">80</span>
<span class="t " style="left:812px;top:208px;color:#000">Text</span>
<svg class="ic" style="left:931px;top:211px" width="11" height="11" viewBox="0 0 11 11"><rect x="0.5" y="0.5" width="10" height="10" fill="#fff" stroke="#000"/></svg>
<span class="t " style="left:962px;top:208px;color:#000;letter-spacing:-0.1px">ISO8859_1</span>
<span class="t " style="left:1050px;top:208px;color:#000;letter-spacing:-0.1px">ISO8859_1</span>
<span class="t " style="left:285px;top:225px;color:#000;width:17px;text-align:right">5</span>
<span class="t u" style="left:379px;top:225px;color:#000;letter-spacing:-0.65px">ATMV_RESPATU</span>
<span class="t u" style="left:548px;top:225px;color:#000;letter-spacing:-0.7px">VARCHAR</span>
<span class="t " style="left:730px;top:225px;color:#000;width:39px;text-align:right">30</span>
<svg class="ic" style="left:931px;top:228px" width="11" height="11" viewBox="0 0 11 11"><rect x="0.5" y="0.5" width="10" height="10" fill="#fff" stroke="#000"/></svg>
<span class="t " style="left:962px;top:225px;color:#000;letter-spacing:-0.1px">ISO8859_1</span>
<span class="t " style="left:1050px;top:225px;color:#000;letter-spacing:-0.1px">ISO8859_1</span>
<span class="t " style="left:285px;top:242px;color:#000;width:17px;text-align:right">6</span>
<span class="t u" style="left:379px;top:242px;color:#000;letter-spacing:-0.65px">ATMV_MINUTOS</span>
<span class="t u" style="left:548px;top:242px;color:#000;letter-spacing:-0.7px">INTEGER</span>
<svg class="ic" style="left:931px;top:245px" width="11" height="11" viewBox="0 0 11 11"><rect x="0.5" y="0.5" width="10" height="10" fill="#fff" stroke="#000"/></svg>
<div class="r" style="left:282px;top:259px;width:1091px;height:16px;background:#3399ff;box-shadow:inset 0 1px 0 #4a7ec0,inset 0 -1px 0 #4a7ec0,inset -1px 0 0 #4a7ec0"></div>
<span class="t " style="left:285px;top:259px;color:#fff;width:17px;text-align:right">7</span>
<span class="t u" style="left:379px;top:259px;color:#fff;letter-spacing:-0.65px">ATMV_TXT_CONSULTA</span>
<span class="t u" style="left:548px;top:259px;color:#fff;letter-spacing:-0.7px">BLOB</span>
<span class="t " style="left:730px;top:259px;color:#fff;width:39px;text-align:right">80</span>
<span class="t " style="left:812px;top:259px;color:#fff">Text</span>
<svg class="ic" style="left:931px;top:262px" width="11" height="11" viewBox="0 0 11 11"><rect x="0.5" y="0.5" width="10" height="10" fill="#3399ff" stroke="#cfe4ff"/></svg>
<span class="t " style="left:962px;top:259px;color:#fff;letter-spacing:-0.1px">ISO8859_1</span>
<span class="t " style="left:1050px;top:259px;color:#fff;letter-spacing:-0.1px">ISO8859_1</span>
<span class="t " style="left:285px;top:276px;color:#000;width:17px;text-align:right">8</span>
<svg class="ic" style="left:331px;top:278px" width="14" height="16" viewBox="0 0 14 16"><circle cx="3.8" cy="3.8" r="3" fill="#e4e8a0" stroke="#1a1a10" stroke-width="1.3"/><circle cx="3.8" cy="3.6" r="0.8" fill="#1a1a10"/><path d="M3.8,6.8 v6.2" stroke="#1a1a10" stroke-width="1.6"/><path d="M3.8,9.5 l1.6,0.8 l-1.6,0.8" stroke="#1a1a10" stroke-width="1" fill="none"/><path d="M7.5,13.5 v-6 h3.5 M7.5,10.2 h3" stroke="#000" stroke-width="1.5" fill="none"/></svg>
<span class="t u" style="left:379px;top:276px;color:#000;letter-spacing:-0.65px">ATMV_SITUA</span>
<span class="t u" style="left:548px;top:276px;color:#000;letter-spacing:-0.7px">INTEGER</span>
<svg class="ic" style="left:931px;top:279px" width="11" height="11" viewBox="0 0 11 11"><rect x="0.5" y="0.5" width="10" height="10" fill="#fff" stroke="#000"/></svg>
<span class="t " style="left:285px;top:293px;color:#000;width:17px;text-align:right">9</span>
<svg class="ic" style="left:331px;top:295px" width="14" height="16" viewBox="0 0 14 16"><circle cx="3.8" cy="3.8" r="3" fill="#e4e8a0" stroke="#1a1a10" stroke-width="1.3"/><circle cx="3.8" cy="3.6" r="0.8" fill="#1a1a10"/><path d="M3.8,6.8 v6.2" stroke="#1a1a10" stroke-width="1.6"/><path d="M3.8,9.5 l1.6,0.8 l-1.6,0.8" stroke="#1a1a10" stroke-width="1" fill="none"/><path d="M7.5,13.5 v-6 h3.5 M7.5,10.2 h3" stroke="#000" stroke-width="1.5" fill="none"/></svg>
<span class="t u" style="left:379px;top:293px;color:#000;letter-spacing:-0.65px">ATMV_SITUATIPO</span>
<span class="t u" style="left:548px;top:293px;color:#000;letter-spacing:-0.7px">VARCHAR</span>
<span class="t " style="left:730px;top:293px;color:#000;width:39px;text-align:right">3</span>
<svg class="ic" style="left:931px;top:296px" width="11" height="11" viewBox="0 0 11 11"><rect x="0.5" y="0.5" width="10" height="10" fill="#fff" stroke="#000"/></svg>
<span class="t " style="left:962px;top:293px;color:#000;letter-spacing:-0.1px">ISO8859_1</span>
<span class="t " style="left:1050px;top:293px;color:#000;letter-spacing:-0.1px">ISO8859_1</span>
<span class="t " style="left:285px;top:310px;color:#000;width:17px;text-align:right">10</span>
<svg class="ic" style="left:331px;top:312px" width="14" height="16" viewBox="0 0 14 16"><circle cx="3.8" cy="3.8" r="3" fill="#e4e8a0" stroke="#1a1a10" stroke-width="1.3"/><circle cx="3.8" cy="3.6" r="0.8" fill="#1a1a10"/><path d="M3.8,6.8 v6.2" stroke="#1a1a10" stroke-width="1.6"/><path d="M3.8,9.5 l1.6,0.8 l-1.6,0.8" stroke="#1a1a10" stroke-width="1" fill="none"/><path d="M7.5,13.5 v-6 h3.5 M7.5,10.2 h3" stroke="#000" stroke-width="1.5" fill="none"/></svg>
<span class="t u" style="left:379px;top:310px;color:#000;letter-spacing:-0.65px">ATMV_MODO</span>
<span class="t u" style="left:548px;top:310px;color:#000;letter-spacing:-0.7px">INTEGER</span>
<svg class="ic" style="left:931px;top:313px" width="11" height="11" viewBox="0 0 11 11"><rect x="0.5" y="0.5" width="10" height="10" fill="#fff" stroke="#000"/></svg>
<span class="t " style="left:285px;top:327px;color:#000;width:17px;text-align:right">11</span>
<span class="t u" style="left:379px;top:327px;color:#000;letter-spacing:-0.65px">ATMV_CODEXTCLIRESP</span>
<span class="t u" style="left:548px;top:327px;color:#000;letter-spacing:-0.7px">INTEGER</span>
<svg class="ic" style="left:931px;top:330px" width="11" height="11" viewBox="0 0 11 11"><rect x="0.5" y="0.5" width="10" height="10" fill="#fff" stroke="#000"/></svg>
<span class="t " style="left:285px;top:344px;color:#000;width:17px;text-align:right">12</span>
<span class="t u" style="left:379px;top:344px;color:#000;letter-spacing:-0.65px">ATMV_CODINTRESP</span>
<span class="t u" style="left:548px;top:344px;color:#000;letter-spacing:-0.7px">VARCHAR</span>
<span class="t " style="left:730px;top:344px;color:#000;width:39px;text-align:right">30</span>
<svg class="ic" style="left:931px;top:347px" width="11" height="11" viewBox="0 0 11 11"><rect x="0.5" y="0.5" width="10" height="10" fill="#fff" stroke="#000"/></svg>
<span class="t " style="left:962px;top:344px;color:#000;letter-spacing:-0.1px">ISO8859_1</span>
<span class="t " style="left:1050px;top:344px;color:#000;letter-spacing:-0.1px">ISO8859_1</span>
<span class="t " style="left:285px;top:361px;color:#000;width:17px;text-align:right">13</span>
<span class="t u" style="left:379px;top:361px;color:#000;letter-spacing:-0.65px">ATMV_DATAFIXA</span>
<span class="t u" style="left:548px;top:361px;color:#000;letter-spacing:-0.7px">DATE</span>
<svg class="ic" style="left:931px;top:364px" width="11" height="11" viewBox="0 0 11 11"><rect x="0.5" y="0.5" width="10" height="10" fill="#fff" stroke="#000"/></svg>
<span class="t " style="left:285px;top:378px;color:#000;width:17px;text-align:right">14</span>
<span class="t u" style="left:379px;top:378px;color:#000;letter-spacing:-0.65px">ATMV_DATAINFO</span>
<span class="t u" style="left:548px;top:378px;color:#000;letter-spacing:-0.7px">DATE</span>
<svg class="ic" style="left:931px;top:381px" width="11" height="11" viewBox="0 0 11 11"><rect x="0.5" y="0.5" width="10" height="10" fill="#fff" stroke="#000"/></svg>
<span class="t " style="left:285px;top:395px;color:#000;width:17px;text-align:right">15</span>
<span class="t u" style="left:379px;top:395px;color:#000;letter-spacing:-0.65px">ATMV_HORAFIXA</span>
<span class="t u" style="left:548px;top:395px;color:#000;letter-spacing:-0.7px">TIME</span>
<svg class="ic" style="left:931px;top:398px" width="11" height="11" viewBox="0 0 11 11"><rect x="0.5" y="0.5" width="10" height="10" fill="#fff" stroke="#000"/></svg>
<span class="t " style="left:285px;top:412px;color:#000;width:17px;text-align:right">16</span>
<span class="t u" style="left:379px;top:412px;color:#000;letter-spacing:-0.65px">ATMV_HORAINFO</span>
<span class="t u" style="left:548px;top:412px;color:#000;letter-spacing:-0.7px">TIME</span>
<svg class="ic" style="left:931px;top:415px" width="11" height="11" viewBox="0 0 11 11"><rect x="0.5" y="0.5" width="10" height="10" fill="#fff" stroke="#000"/></svg>
<div class="r" style="left:305px;top:157px;width:1px;height:272px;background:#eeeeee"></div>
<div class="r" style="left:326px;top:157px;width:1px;height:272px;background:#eeeeee"></div>
<div class="r" style="left:347px;top:157px;width:1px;height:272px;background:#eeeeee"></div>
<div class="r" style="left:376px;top:157px;width:1px;height:272px;background:#eeeeee"></div>
<div class="r" style="left:546px;top:157px;width:1px;height:272px;background:#eeeeee"></div>
<div class="r" style="left:625px;top:157px;width:1px;height:272px;background:#eeeeee"></div>
<div class="r" style="left:727px;top:157px;width:1px;height:272px;background:#eeeeee"></div>
<div class="r" style="left:772px;top:157px;width:1px;height:272px;background:#eeeeee"></div>
<div class="r" style="left:809px;top:157px;width:1px;height:272px;background:#eeeeee"></div>
<div class="r" style="left:858px;top:157px;width:1px;height:272px;background:#eeeeee"></div>
<div class="r" style="left:910px;top:157px;width:1px;height:272px;background:#eeeeee"></div>
<div class="r" style="left:960px;top:157px;width:1px;height:272px;background:#eeeeee"></div>
<div class="r" style="left:1048px;top:157px;width:1px;height:272px;background:#eeeeee"></div>
<div class="r" style="left:1137px;top:157px;width:1px;height:272px;background:#eeeeee"></div>
<div class="r" style="left:1195px;top:157px;width:1px;height:272px;background:#eeeeee"></div>
<div class="r" style="left:1295px;top:157px;width:1px;height:272px;background:#eeeeee"></div>
<div class="r" style="left:1373px;top:157px;width:1px;height:272px;background:#eeeeee"></div>
<div class="r" style="left:305px;top:259px;width:1px;height:16px;background:#b8ecff"></div>
<div class="r" style="left:326px;top:259px;width:1px;height:16px;background:#b8ecff"></div>
<div class="r" style="left:347px;top:259px;width:1px;height:16px;background:#b8ecff"></div>
<div class="r" style="left:376px;top:259px;width:1px;height:16px;background:#b8ecff"></div>
<div class="r" style="left:546px;top:259px;width:1px;height:16px;background:#b8ecff"></div>
<div class="r" style="left:625px;top:259px;width:1px;height:16px;background:#b8ecff"></div>
<div class="r" style="left:727px;top:259px;width:1px;height:16px;background:#b8ecff"></div>
<div class="r" style="left:772px;top:259px;width:1px;height:16px;background:#b8ecff"></div>
<div class="r" style="left:809px;top:259px;width:1px;height:16px;background:#b8ecff"></div>
<div class="r" style="left:858px;top:259px;width:1px;height:16px;background:#b8ecff"></div>
<div class="r" style="left:910px;top:259px;width:1px;height:16px;background:#b8ecff"></div>
<div class="r" style="left:960px;top:259px;width:1px;height:16px;background:#b8ecff"></div>
<div class="r" style="left:1048px;top:259px;width:1px;height:16px;background:#b8ecff"></div>
<div class="r" style="left:1137px;top:259px;width:1px;height:16px;background:#b8ecff"></div>
<div class="r" style="left:1195px;top:259px;width:1px;height:16px;background:#b8ecff"></div>
<div class="r" style="left:1295px;top:259px;width:1px;height:16px;background:#b8ecff"></div>
<div class="r" style="left:282px;top:259px;width:1091px;height:0px;"></div>
<div class="r" style="left:281px;top:660px;width:1159px;height:5px;background:#f0f0f0"></div>
<div class="r" style="left:281px;top:665px;width:1159px;height:22px;background:#fff"></div>
<div class="r" style="left:287px;top:666px;width:86px;height:19px;background:#ececec"></div>
<div class="r" style="left:373px;top:666px;width:1px;height:19px;background:#000"></div>
<span class="t " style="left:291px;top:668px;letter-spacing:-0.2px">Field description</span>
<span class="t " style="left:378px;top:668px;letter-spacing:-0.25px">Field dependencies</span>
<div class="r" style="left:282px;top:687px;width:1158px;height:110px;background:#fff;border-top:2px solid #6a6a6a;border-left:2px solid #6a6a6a"></div>
<div class="r" style="left:284px;top:689px;width:28px;height:91px;background:#f0f0f0"></div>
<div class="r" style="left:312px;top:689px;width:1px;height:91px;background:#c0c0c0"></div>
<div class="r" style="left:313px;top:707px;width:1110px;height:1px;background:#ececec"></div>
<div class="r" style="left:954px;top:689px;width:1px;height:91px;background:#a0a0a0"></div>
<div class="r" style="left:1423px;top:689px;width:17px;height:91px;background:#f0f0f0"></div>
<svg class="ic" style="left:1426px;top:696px" width="9" height="5" viewBox="0 0 9 5"><path d="M1,4 L4.5,1 L8,4" stroke="#606060" stroke-width="1.4" fill="none"/></svg>
<svg class="ic" style="left:1426px;top:769px" width="9" height="5" viewBox="0 0 9 5"><path d="M1,1 L4.5,4 L8,1" stroke="#606060" stroke-width="1.4" fill="none"/></svg>
<div class="r" style="left:284px;top:780px;width:1156px;height:17px;background:#f0f0f0"></div>
<svg class="ic" style="left:289px;top:785px" width="4" height="7" viewBox="0 0 4 7"><path d="M4,0 L0,3.5 L4,7z" fill="#505050"/></svg>
<svg class="ic" style="left:1410px;top:785px" width="4" height="7" viewBox="0 0 4 7"><path d="M0,0 L4,3.5 L0,7z" fill="#303030"/></svg>
<div class="r" style="left:301px;top:781px;width:247px;height:15px;background:linear-gradient(#f8f8f8,#e4e4e4 50%,#d4d4d4);border:1px solid #9a9a9a;border-radius:2px"></div>
<div class="r" style="left:421px;top:785px;width:1px;height:6px;background:#666"></div>
<div class="r" style="left:423px;top:785px;width:1px;height:6px;background:#666"></div>
<div class="r" style="left:425px;top:785px;width:1px;height:6px;background:#666"></div>
<div class="r" style="left:1423px;top:780px;width:15px;height:17px;background:#f0f0f0"></div>
<div class="r" style="left:1438px;top:689px;width:2px;height:108px;background:#e4e4e4"></div>
<div class="r" style="left:0px;top:797px;width:1440px;height:24px;background:#f0f0f0"></div>
<div class="r" style="left:0px;top:797px;width:1440px;height:1px;background:#fafafa"></div>
<div class="r" style="left:0px;top:820px;width:1440px;height:1px;background:#a0a0a0"></div>
<div class="r" style="left:4px;top:801px;width:1px;height:17px;background:#a0a0a0"></div>
<div class="r" style="left:9px;top:800px;width:134px;height:20px;background:#ececec;border-top:1px solid #c0c0c0;border-left:1px solid #fff"></div>
<svg class="ic" style="left:16px;top:804px" width="14" height="11" viewBox="0 0 14 11"><rect x="0.5" y="0.5" width="13" height="10" fill="#fff" stroke="#2c2c5c"/><rect x="1" y="1" width="12" height="2.6" fill="#5a5aa8"/><path d="M3,6h4M8.5,6h4M3,8.5h4M8.5,8.5h4" stroke="#8ab858" stroke-width="1.6"/><rect x="2" y="4.5" width="10" height="6" fill="none" stroke="#c8dca8" stroke-width="0.6"/></svg>
<span class="t " style="left:34px;top:802px;font-size:12px;letter-spacing:-0.55px">GAT_ATENDXMOV</span>
<div class="r" style="left:143px;top:802px;width:1px;height:17px;background:#c8c8c8"></div>
<svg class="ic" style="left:154px;top:802px" width="16" height="16" viewBox="0 0 16 16"><path d="M2,1.5h8l2,2v11h-10z" fill="#fff" stroke="#333"/><path d="M4,5.5h6M4,8.5h6M4,11.5h5" stroke="#d83030" stroke-width="1.2"/><path d="M11,7 l4,3 l-4,3z" fill="#222"/></svg>
<span class="t " style="left:171px;top:802px;font-size:12px;letter-spacing:-0.05px">Blob Editor</span>
<div class="r" style="left:0px;top:821px;width:1440px;height:19px;background:#eeecec"></div>
<div class="r" style="left:0px;top:821px;width:1440px;height:1px;background:#fff"></div>
<span class="t " style="left:32px;top:824px;font-size:12px;letter-spacing:-0.1px">1:&nbsp;&nbsp;&nbsp;23</span>
<div class="r" style="left:65px;top:823px;width:1px;height:16px;background:#ddd"></div>
<div class="r" style="left:138px;top:823px;width:1px;height:16px;background:#ddd"></div>
<span class="t " style="left:144px;top:824px;font-size:12px;letter-spacing:-0.5px">SYSDB (Dialect 3)</span>
<div class="r" style="left:368px;top:823px;width:1px;height:16px;background:#ddd"></div>
<span class="t " style="left:375px;top:824px;font-size:12px;letter-spacing:-0.35px">247 changes of table [GER_PARAM_SIEC] left</span>
<div class="r" style="left:617px;top:823px;width:1px;height:16px;background:#ddd"></div>
<div class="r" style="left:0px;top:840px;width:1440px;height:60px;background:linear-gradient(#5c5c5c 0px,#464646 3px,#383838 9px,#2a2a2a 14px,#060606 15.5px,#020202 100%)"></div>
<div class="r" style="left:0px;top:840px;width:1440px;height:1px;background:#6a6a6a"></div>
<svg class="ic" style="left:2px;top:842px" width="56" height="56" viewBox="0 0 56 56"><defs><radialGradient id="orb" cx="50%" cy="40%" r="60%"><stop offset="0" stop-color="#8ad8f0"/><stop offset="0.5" stop-color="#2a78b8"/><stop offset="1" stop-color="#0a2a4a"/></radialGradient></defs><circle cx="28" cy="29" r="25" fill="#000"/><circle cx="28" cy="29" r="21" fill="url(#orb)" stroke="#4a6a8a" stroke-width="1.5"/><path d="M17,21 q5,-3 10,0 v8 q-5,-3 -10,0z" fill="#f04a20"/><path d="M28,21 q5,3 10,0 v8 q-5,3 -10,0z" fill="#6ac030"/><path d="M17,30 q5,-3 10,0 v8 q-5,-3 -10,0z" fill="#2a98e8"/><path d="M28,30 q5,3 10,0 v8 q-5,3 -10,0z" fill="#f8c020"/><ellipse cx="28" cy="18" rx="14" ry="7" fill="#fff" opacity="0.25"/></svg>
<svg class="ic" style="left:65px;top:848px" width="16" height="16" viewBox="0 0 16 16"><rect x="1" y="2" width="14" height="11" fill="#1a4aa8" stroke="#aac8f0"/><rect x="3" y="4" width="6" height="4" fill="#fff" opacity=".8"/><rect x="7" y="7" width="6" height="4" fill="#fff" opacity=".8"/></svg>
<svg class="ic" style="left:88px;top:848px" width="16" height="16" viewBox="0 0 16 16"><rect x="1" y="2" width="14" height="10" fill="#3a6ad8" stroke="#c8d8f0"/><rect x="3" y="12" width="10" height="2" fill="#888"/></svg>
<svg class="ic" style="left:111px;top:847px" width="16" height="16" viewBox="0 0 16 16"><ellipse cx="8" cy="8.5" rx="5.5" ry="5" fill="none" stroke="#3a98e8" stroke-width="2.5"/><path d="M3,8.5h10" stroke="#3a98e8" stroke-width="2"/><path d="M1,13 q6,-14 15,-12" stroke="#f0c030" stroke-width="1.3" fill="none"/></svg>
<svg class="ic" style="left:134px;top:847px" width="16" height="16" viewBox="0 0 16 16"><circle cx="8" cy="8.5" r="6.5" fill="#e86a20"/><circle cx="9" cy="7.5" r="4" fill="#2a4aa8"/><path d="M2,7 q3,8 12,5" fill="#f09030"/></svg>
<svg class="ic" style="left:65px;top:877px" width="16" height="16" viewBox="0 0 16 16"><circle cx="8" cy="8" r="6.5" fill="#e84a3a"/><path d="M8,8 L14,5 A6.5,6.5 0 0 1 5,14z" fill="#f8c830"/><path d="M8,8 L5,14 A6.5,6.5 0 0 1 3,3z" fill="#4ab84a"/><circle cx="8" cy="8" r="3" fill="#4a8ae8" stroke="#fff"/></svg>
<svg class="ic" style="left:88px;top:877px" width="16" height="16" viewBox="0 0 16 16"><circle cx="3" cy="8" r="1.6" fill="#5ab85a"/><circle cx="7" cy="4" r="1.6" fill="#5ab85a"/><circle cx="7" cy="12" r="1.6" fill="#5ab85a"/><circle cx="11" cy="8" r="1.6" fill="#9ad89a"/><circle cx="14" cy="5" r="1.6" fill="#5ab85a"/><circle cx="14" cy="11" r="1.6" fill="#5ab85a"/></svg>
<svg class="ic" style="left:111px;top:877px" width="16" height="16" viewBox="0 0 16 16"><rect x="1" y="1" width="14" height="14" fill="#e8a030" stroke="#5aa8c8" stroke-width="1.5"/><path d="M6,4 l6,4 l-6,4z" fill="#fff"/></svg>
<svg class="ic" style="left:134px;top:877px" width="16" height="16" viewBox="0 0 16 16"><path d="M8,1 l6,3 v8 l-6,3 l-6,-3 v-8z" fill="#c8d8f0" stroke="#8aa0c8"/><path d="M2,4 l6,3 l6,-3 M8,7 v8" stroke="#8aa0c8" fill="none"/></svg>
<div class="r" style="left:162px;top:842px;width:156px;height:26px;background:linear-gradient(#8a8a8a 0%,#606060 18%,#303030 42%,#060606 50%,#020202 100%);border:1px solid #505050;border-radius:3px;box-shadow:inset 0 0 0 1px #202020"></div>
<svg class="ic" style="left:170px;top:847px" width="16" height="16" viewBox="0 0 16 16"><circle cx="8" cy="8.5" r="6.5" fill="#e86a20"/><circle cx="9" cy="7.5" r="4" fill="#2a4aa8"/><path d="M2,7 q3,8 12,5" fill="#f09030"/></svg>
<span class="t " style="left:190px;top:847px;color:#fff;font-size:12px;letter-spacing:0px">Responder a Caract...</span>
<div class="r" style="left:322px;top:842px;width:156px;height:26px;background:linear-gradient(#8a8a8a 0%,#606060 18%,#303030 42%,#060606 50%,#020202 100%);border:1px solid #505050;border-radius:3px;box-shadow:inset 0 0 0 1px #202020"></div>
<svg class="ic" style="left:330px;top:847px" width="16" height="16" viewBox="0 0 16 16"><path d="M2,3 h4 v10 h-4z" fill="#d8c050"/><path d="M5,2 l8,-1 v14 l-8,-1z" fill="#e8d870" stroke="#8a7a20" stroke-width="0.6"/><path d="M9,2 v6 M6,5 h6" stroke="#3ab83a" stroke-width="2.2"/></svg>
<span class="t " style="left:350px;top:847px;color:#fff;font-size:12px;letter-spacing:0px">bd</span>
<div class="r" style="left:482px;top:842px;width:156px;height:26px;background:linear-gradient(#8a8a8a 0%,#606060 18%,#303030 42%,#060606 50%,#020202 100%);border:1px solid #505050;border-radius:3px;box-shadow:inset 0 0 0 1px #202020"></div>
<svg class="ic" style="left:490px;top:847px" width="16" height="16" viewBox="0 0 16 16"><path d="M2,3 h4 v10 h-4z" fill="#d8c050"/><path d="M5,2 l8,-1 v14 l-8,-1z" fill="#e8d870" stroke="#8a7a20" stroke-width="0.6"/><path d="M9,2 v6 M6,5 h6" stroke="#3ab83a" stroke-width="2.2"/></svg>
<span class="t " style="left:510px;top:847px;color:#fff;font-size:12px;letter-spacing:0px">Organizar</span>
<div class="r" style="left:642px;top:842px;width:156px;height:26px;background:linear-gradient(#8a8a8a 0%,#606060 18%,#303030 42%,#060606 50%,#020202 100%);border:1px solid #505050;border-radius:3px;box-shadow:inset 0 0 0 1px #202020"></div>
<svg class="ic" style="left:650px;top:847px" width="16" height="16" viewBox="0 0 16 16"><path d="M2,2 h5 v12 h-5z" fill="#b8c8d8"/><path d="M6,1 l7,1 v12 l-7,1z" fill="#d8e8f0" stroke="#6a8aa8" stroke-width="0.6"/></svg>
<span class="t " style="left:670px;top:847px;color:#fff;font-size:12px;letter-spacing:0px">Downloads</span>
<div class="r" style="left:802px;top:842px;width:156px;height:26px;background:linear-gradient(#8a8a8a 0%,#606060 18%,#303030 42%,#060606 50%,#020202 100%);border:1px solid #505050;border-radius:3px;box-shadow:inset 0 0 0 1px #202020"></div>
<svg class="ic" style="left:810px;top:847px" width="16" height="16" viewBox="0 0 16 16"><path d="M2,3 h4 v10 h-4z" fill="#d8c050"/><path d="M5,2 l8,-1 v14 l-8,-1z" fill="#e8d870" stroke="#8a7a20" stroke-width="0.6"/><path d="M9,2 v6 M6,5 h6" stroke="#3ab83a" stroke-width="2.2"/></svg>
<span class="t " style="left:830px;top:847px;color:#fff;font-size:12px;letter-spacing:0px">Firebird</span>
<div class="r" style="left:962px;top:842px;width:156px;height:26px;background:linear-gradient(#5a5a5a 0%,#3a3a3a 20%,#1a1a1a 45%,#050505 52%,#0a0a0a 100%);border:1px solid #505050;border-radius:3px;box-shadow:inset 0 0 0 1px #202020"></div>
<svg class="ic" style="left:970px;top:847px" width="16" height="16" viewBox="0 0 16 16"><circle cx="3" cy="8" r="1.6" fill="#5ab85a"/><circle cx="7" cy="4" r="1.6" fill="#5ab85a"/><circle cx="7" cy="12" r="1.6" fill="#5ab85a"/><circle cx="11" cy="8" r="1.6" fill="#9ad89a"/><circle cx="14" cy="5" r="1.6" fill="#5ab85a"/><circle cx="14" cy="11" r="1.6" fill="#5ab85a"/></svg>
<span class="t " style="left:990px;top:847px;color:#fff;font-size:12px;letter-spacing:0px">IB Expert</span>
<div class="r" style="left:162px;top:872px;width:156px;height:26px;background:linear-gradient(#8a8a8a 0%,#606060 18%,#303030 42%,#060606 50%,#020202 100%);border:1px solid #505050;border-radius:3px;box-shadow:inset 0 0 0 1px #202020"></div>
<svg class="ic" style="left:170px;top:877px" width="16" height="16" viewBox="0 0 16 16"><circle cx="8" cy="8" r="6.5" fill="#2a58c8" stroke="#aac8f0"/><path d="M2,8h12M8,2v12" stroke="#8ab8f0"/><rect x="9" y="9" width="6" height="6" fill="#8aa8d8" stroke="#fff" stroke-width="0.7"/></svg>
<span class="t " style="left:190px;top:877px;color:#fff;font-size:12px;letter-spacing:0px">Gestão de Desenvol...</span>
<div class="r" style="left:322px;top:872px;width:156px;height:26px;background:linear-gradient(#8a8a8a 0%,#606060 18%,#303030 42%,#060606 50%,#020202 100%);border:1px solid #505050;border-radius:3px;box-shadow:inset 0 0 0 1px #202020"></div>
<svg class="ic" style="left:330px;top:877px" width="16" height="16" viewBox="0 0 16 16"><rect x="3" y="2" width="11" height="13" fill="#b8d8e8" stroke="#6a98b8"/><path d="M5,5h7M5,7h7M5,9h7M5,11h7" stroke="#6a98b8" stroke-width="0.7"/></svg>
<span class="t " style="left:350px;top:877px;color:#fff;font-size:12px;letter-spacing:0px">Novo Documento d...</span>
<div class="r" style="left:482px;top:872px;width:156px;height:26px;background:linear-gradient(#8a8a8a 0%,#606060 18%,#303030 42%,#060606 50%,#020202 100%);border:1px solid #505050;border-radius:3px;box-shadow:inset 0 0 0 1px #202020"></div>
<svg class="ic" style="left:490px;top:877px" width="16" height="16" viewBox="0 0 16 16"><circle cx="8" cy="8" r="7" fill="#1a9ae8"/><text x="4.5" y="12.5" font-size="11" font-weight="bold" fill="#fff" font-family="Liberation Sans">S</text></svg>
<span class="t " style="left:510px;top:877px;color:#fff;font-size:12px;letter-spacing:0px">Skype™ - system_pr...</span>
<div class="r" style="left:642px;top:872px;width:156px;height:26px;background:linear-gradient(#8a8a8a 0%,#606060 18%,#303030 42%,#060606 50%,#020202 100%);border:1px solid #505050;border-radius:3px;box-shadow:inset 0 0 0 1px #202020"></div>
<svg class="ic" style="left:650px;top:877px" width="16" height="16" viewBox="0 0 16 16"><path d="M3,2 l5,8 l5,-8" stroke="#e8d060" stroke-width="2" fill="none"/><path d="M7,9 l2,6 l2,-6z" fill="#8a5a20"/></svg>
<span class="t " style="left:670px;top:877px;color:#fff;font-size:12px;letter-spacing:0px">Sem título - Paint</span>
<div class="r" style="left:802px;top:872px;width:156px;height:26px;background:linear-gradient(#8a8a8a 0%,#606060 18%,#303030 42%,#060606 50%,#020202 100%);border:1px solid #505050;border-radius:3px;box-shadow:inset 0 0 0 1px #202020"></div>
<svg class="ic" style="left:810px;top:877px" width="16" height="16" viewBox="0 0 16 16"><path d="M8,1 l6,3 v8 l-6,3 l-6,-3 v-8z" fill="#c8d8f0" stroke="#8aa0c8"/><path d="M2,4 l6,3 l6,-3 M8,7 v8" stroke="#8aa0c8" fill="none"/></svg>
<span class="t " style="left:830px;top:877px;color:#fff;font-size:12px;letter-spacing:0px">repweb - NetBeans I...</span>
<span class="t " style="left:1223px;top:846px;color:#fff;font-size:12px">PT</span>
<svg class="ic" style="left:1268px;top:846px" width="16" height="16" viewBox="0 0 16 16"><rect x="3" y="1" width="10" height="14" fill="#5ab8d8" stroke="#aad"/><ellipse cx="8" cy="9" rx="7" ry="3" fill="none" stroke="#e8a040" stroke-width="1.2"/></svg>
<svg class="ic" style="left:1286px;top:846px" width="16" height="16" viewBox="0 0 16 16"><rect x="1" y="1" width="14" height="14" rx="2" fill="#f0f4f8"/><path d="M3,6 l3,5 l3,-5 l3,5 l2,-3" stroke="#1a3a6a" stroke-width="1.6" fill="none"/></svg>
<svg class="ic" style="left:1303px;top:846px" width="16" height="16" viewBox="0 0 16 16"><rect x="1" y="1" width="14" height="14" fill="#c82020"/><path d="M3,12 q5,-3 8,-8" stroke="#fff" stroke-width="1.5" fill="none"/><circle cx="12" cy="4" r="2" fill="none" stroke="#fff"/></svg>
<svg class="ic" style="left:1332px;top:846px" width="16" height="16" viewBox="0 0 16 16"><rect x="2" y="1" width="11" height="9" fill="#3a78d8" stroke="#fff"/><rect x="0" y="4" width="10" height="8" fill="#2a5ab8" stroke="#fff"/><circle cx="12" cy="12" r="3.5" fill="#3ab83a" stroke="#1a6aa8"/></svg>
<svg class="ic" style="left:1268px;top:864px" width="16" height="16" viewBox="0 0 16 16"><ellipse cx="8" cy="8" rx="7" ry="6.5" fill="#7ac83a"/><path d="M4,8 l3,3 l5,-6" stroke="#fff" stroke-width="1.5" fill="none"/></svg>
<svg class="ic" style="left:1286px;top:864px" width="16" height="16" viewBox="0 0 16 16"><rect x="1" y="4" width="10" height="11" fill="#3a98b8" stroke="#aac"/><rect x="8" y="1" width="7" height="8" fill="#e8d870"/><rect x="7" y="10" width="7" height="5" fill="#c8e0f0"/></svg>
<svg class="ic" style="left:1303px;top:864px" width="16" height="16" viewBox="0 0 16 16"><rect x="1" y="1" width="14" height="14" rx="2" fill="#d82020"/><path d="M4,13 q3,-12 6,-8 q2,3 -3,4 q4,0 5,3" stroke="#fff" stroke-width="1.6" fill="none"/></svg>
<svg class="ic" style="left:1332px;top:864px" width="16" height="16" viewBox="0 0 16 16"><path d="M1,6h3l4,-4v12l-4,-4h-3z" fill="#e8e8e8"/><path d="M10,5 q2,3 0,6 M12,3 q4,5 0,10" stroke="#e8e8e8" stroke-width="1.2" fill="none"/></svg>
<svg class="ic" style="left:1268px;top:881px" width="16" height="16" viewBox="0 0 16 16"><path d="M1,2 l10,0 l4,4 v9 h-14z" fill="#2a68c8" stroke="#a8c8f0"/><path d="M4,8h8M4,10h8" stroke="#fff" stroke-width="0.6" stroke-dasharray="1 1"/></svg>
<span class="t " style="left:1377px;top:840px;color:#fff;font-size:12px;letter-spacing:-0.3px">13:58</span>
<span class="t " style="left:1359px;top:862px;color:#fff;font-size:12px;letter-spacing:0px">quarta-feira</span>
<span class="t " style="left:1361px;top:884px;color:#fff;font-size:12px;letter-spacing:-0.35px">20/11/2013</span>
</body></html>
